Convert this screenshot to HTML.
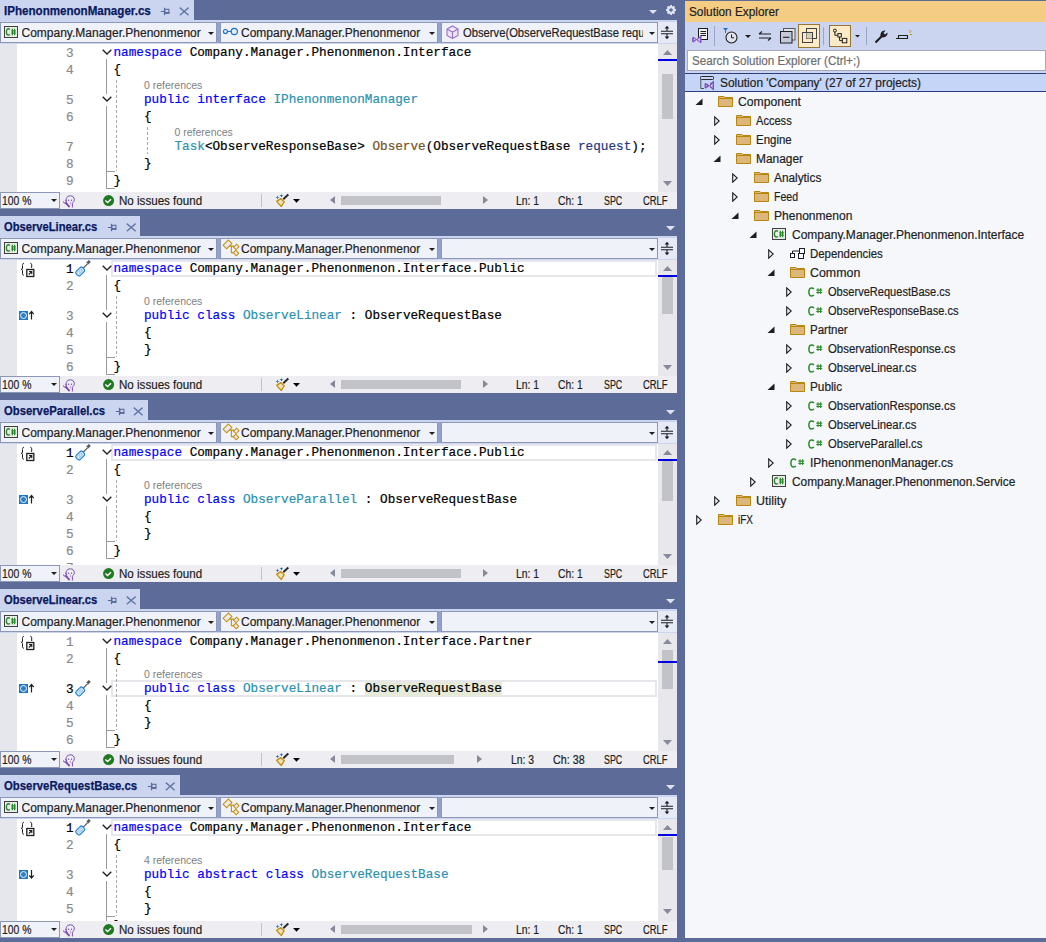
<!DOCTYPE html>
<html><head><meta charset="utf-8"><style>
*{margin:0;padding:0}
html,body{width:1046px;height:942px;overflow:hidden;background:#5d6b99;position:relative}
.t{position:absolute;white-space:pre;font-family:"Liberation Sans",sans-serif;font-size:12px;line-height:15px;color:#1e1e1e;-webkit-text-stroke:0.2px currentColor}
.tab{font-weight:bold;font-size:11.5px;color:#0e1c6e}
.clip{overflow:hidden}
.code{font-family:"Liberation Mono",monospace;font-size:12.7px;line-height:17px;color:#000}
.num{color:#8a8a8a}
.cl{font-size:10.5px;line-height:13px;color:#808080;-webkit-text-stroke:0}
.st{color:#1e1e1e}
.se{font-size:12px;line-height:19px;color:#1e1e1e}
</style></head>
<body>
<div style="position:absolute;left:0px;top:0px;width:194px;height:20px;background:#ccd5f0;"></div>
<div class="t" style="left:4.2px;top:4px;font-size:12px;line-height:15px;color:#0b1a60;font-weight:bold;transform:scaleX(0.9656);transform-origin:0 0;-webkit-text-stroke:0.25px #0b1a60;">IPhenonmenonManager.cs</div>
<svg style="position:absolute;left:160px;top:7px;" width="10" height="10" viewBox="0 0 10 10"><path d="M0.8 4.5H4M4.5 0.8V8.2" stroke="#5a6b9e" stroke-width="1.2"/><rect x="4.9" y="2.3" width="4" height="4" fill="none" stroke="#5a6b9e" stroke-width="1.1"/><rect x="4.5" y="5" width="4.8" height="1.6" fill="#5a6b9e"/></svg>
<svg style="position:absolute;left:179px;top:7px;" width="11" height="9" viewBox="0 0 11 9"><path d="M0.8 0.6L9.6 8.2M9.6 0.6L0.8 8.2" stroke="#6478a8" stroke-width="1.4" fill="none"/></svg>
<svg style="position:absolute;left:649px;top:10px;" width="8" height="5" viewBox="0 0 8 5"><path d="M0 0H8L4.0 4.0Z" fill="#dfe3ef"/></svg>
<svg style="position:absolute;left:665px;top:4px;" width="12" height="12" viewBox="0 0 12 12"><circle cx="6" cy="6" r="2.9" fill="none" stroke="#dfe3ef" stroke-width="2.2"/><g stroke="#dfe3ef" stroke-width="1.8"><path d="M6 1V3M6 9V11M1 6H3M9 6H11M2.5 2.5L3.9 3.9M8.1 8.1L9.5 9.5M2.5 9.5L3.9 8.1M8.1 3.9L9.5 2.5"/></g></svg>
<div style="position:absolute;left:0px;top:20px;width:677px;height:24px;background:#ccd5ee;"></div>
<div style="position:absolute;left:0px;top:22px;width:217px;height:21px;background:#f0f2fa;box-sizing:border-box;border:1px solid #8d98b8"></div>
<svg style="position:absolute;left:208px;top:32px;" width="6" height="4" viewBox="0 0 6 4"><path d="M0 0H6L3.0 3.0Z" fill="#1e1e1e"/></svg>
<div style="position:absolute;left:220px;top:22px;width:218px;height:21px;background:#f0f2fa;box-sizing:border-box;border:1px solid #8d98b8"></div>
<svg style="position:absolute;left:429px;top:32px;" width="6" height="4" viewBox="0 0 6 4"><path d="M0 0H6L3.0 3.0Z" fill="#1e1e1e"/></svg>
<div style="position:absolute;left:441px;top:22px;width:217px;height:21px;background:#f0f2fa;box-sizing:border-box;border:1px solid #8d98b8"></div>
<svg style="position:absolute;left:649px;top:32px;" width="6" height="4" viewBox="0 0 6 4"><path d="M0 0H6L3.0 3.0Z" fill="#1e1e1e"/></svg>
<div style="position:absolute;left:217px;top:22px;width:3px;height:21px;background:#93a2cc;"></div>
<div style="position:absolute;left:438px;top:22px;width:3px;height:21px;background:#93a2cc;"></div>
<div style="position:absolute;left:658px;top:22px;width:19px;height:21px;background:#e6eaf7;"></div>
<svg style="position:absolute;left:660px;top:24px;" width="14" height="16" viewBox="0 0 14 16"><path d="M1 7.3H13M1 9.7H13M7 3.5V7M7 10V13" stroke="#1e1e1e" stroke-width="1.1"/><path d="M4.6 4.6L7 1.8L9.4 4.6Z M4.6 12.4L7 15.2L9.4 12.4Z" fill="#1e1e1e"/></svg>
<svg style="position:absolute;left:4px;top:26px;" width="14" height="13" viewBox="0 0 14 13"><rect x="0.5" y="0.5" width="13" height="11" fill="#ececec" stroke="#404040"/><path d="M5.9 3.4C5.5 3 5 2.8 4.4 2.8C3.2 2.8 2.4 3.8 2.4 5.9C2.4 8 3.2 9 4.4 9C5 9 5.5 8.8 5.9 8.4" fill="none" stroke="#2b8a2b" stroke-width="1.4"/><path d="M8.4 2.8V9.2M10.6 2.8V9.2M7.2 4.8H11.8M7.2 7.1H11.8" stroke="#2b8a2b" stroke-width="1.2"/></svg>
<div class="t ui clip" style="left:21.5px;top:26px;width:181px">Company.Manager.Phenonmenor</div>
<svg style="position:absolute;left:221px;top:26px;" width="18" height="11" viewBox="0 0 18 11"><circle cx="4.45" cy="5.5" r="2" fill="#e4eef9" stroke="#1a73c8" stroke-width="1.15"/><circle cx="13.3" cy="5.5" r="3.1" fill="#e4eef9" stroke="#1a73c8" stroke-width="1.15"/><path d="M6.4 5.5H10.2" stroke="#1a73c8" stroke-width="1.1"/></svg>
<div class="t ui clip" style="left:241px;top:26px;width:182px">Company.Manager.Phenonmenor</div>
<svg style="position:absolute;left:446px;top:25px;" width="13" height="14" viewBox="0 0 13 14"><path d="M6.5 1L12 4V10.5L6.5 13.5L1 10.5V4Z M1 4L6.5 7L12 4M6.5 7V13.5" fill="#ece4f7" stroke="#9b6fc8" stroke-width="1.1"/></svg>
<div class="t ui clip" style="left:462.8px;top:26px;width:180px"><span style="display:inline-block;transform:scaleX(0.935);transform-origin:0 0">Observe(ObserveRequestBase requ</span></div>
<div style="position:absolute;left:0px;top:44px;width:17px;height:148px;background:#e6e7ed;"></div>
<div style="position:absolute;left:17px;top:44px;width:641px;height:148px;background:#ffffff;"></div>
<div style="position:absolute;left:658px;top:44px;width:19px;height:148px;background:#e8e8ec;"></div>
<svg style="position:absolute;left:663px;top:50px;" width="10" height="6" viewBox="0 0 10 6"><path d="M0 5H9L4.5 0Z" fill="#868999"/></svg>
<div style="position:absolute;left:662px;top:74px;width:11px;height:45px;background:#c2c3c9;"></div>
<div style="position:absolute;left:658px;top:59px;width:19px;height:2px;background:#0000e0;"></div>
<svg style="position:absolute;left:663px;top:181px;" width="10" height="6" viewBox="0 0 10 6"><path d="M0 0H9L4.5 5Z" fill="#868999"/></svg>
<div style="position:absolute;left:0px;top:192px;width:677px;height:17px;background:#eeeef2;"></div>
<div style="position:absolute;left:0px;top:192px;width:60px;height:17px;background:#f0f2fa;box-sizing:border-box;border:1px solid #8d98b8"></div>
<div class="t" style="left:2.3px;top:194px;font-size:12px;line-height:15px;color:#1e1e1e;transform:scaleX(0.8641);transform-origin:0 0;">100 %</div>
<svg style="position:absolute;left:51px;top:199px;" width="6" height="4" viewBox="0 0 6 4"><path d="M0 0H6L3.0 3.0Z" fill="#1e1e1e"/></svg>
<svg style="position:absolute;left:58px;top:191px;" width="20" height="18" viewBox="0 0 20 18"><path d="M9.6 13C8.2 11.6 7.8 9.6 8.2 7.8C8.7 5.7 10.5 4.8 12.4 4.8C14.7 4.8 16.4 6.4 16.3 8.8C16.2 10.4 15.2 11.2 14.4 12.2V16.5" fill="none" stroke="#7b4fb5" stroke-width="1"/><circle cx="10.6" cy="9.2" r="0.7" fill="#7b4fb5"/><circle cx="13.5" cy="9.2" r="0.7" fill="#7b4fb5"/><path d="M12.4 10.5V13.5" stroke="#b9a0dc" stroke-width="1"/><path d="M11.6 16L7.8 12.2" stroke="#7b4fb5" stroke-width="1.8"/><path d="M8.5 12.4C6.7 13.3 4.7 12.1 5.1 10L6.9 11.7L8.3 10.4L6.6 9.1C8.5 8.7 9.8 10.6 8.5 12.4Z" fill="#7b4fb5"/></svg>
<svg style="position:absolute;left:103px;top:195px;" width="12" height="12" viewBox="0 0 12 12"><circle cx="5.6" cy="5.6" r="5.5" fill="#1f7a22"/><path d="M2.4 5.6L4.6 7.6L8 4.3" stroke="#fff" stroke-width="1.4" fill="none"/></svg>
<div class="t" style="left:119.3px;top:194px;font-size:12px;line-height:15px;color:#1e1e1e;transform:scaleX(0.9658);transform-origin:0 0;">No issues found</div>
<div style="position:absolute;left:261px;top:194px;width:1px;height:13px;background:#c2c3c9;"></div>
<svg style="position:absolute;left:272px;top:192px;" width="30" height="17" viewBox="0 0 30 17"><path d="M11.3 7.2L16.3 2.6" stroke="#2a2a2a" stroke-width="2"/><path d="M4.6 9.4L8.8 6.7L12.2 9.7L9.3 14.5Z" fill="#efe2b8" stroke="#c49018" stroke-width="1.4" stroke-linejoin="round"/><path d="M5.5 3.6L6 5L7.4 5.5L6 6L5.5 7.4L5 6L3.6 5.5L5 5Z" fill="#1a6fc0"/><path d="M9.4 2L9.9 3.3L11.2 3.8L9.9 4.3L9.4 5.6L8.9 4.3L7.6 3.8L8.9 3.3Z" fill="#0f5a9e"/><path d="M21 7H28L24.5 10.8Z" fill="#000"/></svg>
<svg style="position:absolute;left:330px;top:196px;" width="6" height="9" viewBox="0 0 6 9"><path d="M5 0V8L0 4Z" fill="#868999"/></svg>
<div style="position:absolute;left:341px;top:196px;width:100px;height:9px;background:#c2c3c9;"></div>
<svg style="position:absolute;left:483px;top:196px;" width="6" height="9" viewBox="0 0 6 9"><path d="M0 0V8L5 4Z" fill="#868999"/></svg>
<div class="t" style="left:516.4px;top:194px;font-size:12px;line-height:15px;color:#1e1e1e;transform:scaleX(0.8656);transform-origin:0 0;">Ln: 1</div>
<div class="t" style="left:558.4px;top:194px;font-size:12px;line-height:15px;color:#1e1e1e;transform:scaleX(0.8577);transform-origin:0 0;">Ch: 1</div>
<div class="t" style="left:603.7px;top:194px;font-size:12px;line-height:15px;color:#1e1e1e;transform:scaleX(0.7416);transform-origin:0 0;">SPC</div>
<div class="t" style="left:642.6px;top:194px;font-size:12px;line-height:15px;color:#1e1e1e;transform:scaleX(0.7851);transform-origin:0 0;">CRLF</div>
<div style="position:absolute;left:0;top:44px;width:658px;height:148px;overflow:hidden">
<svg style="position:absolute;left:102px;top:5px" width="10" height="6" viewBox="0 0 10 6"><path d="M0.7 0.7L5 5L9.3 0.7" fill="none" stroke="#1e1e1e" stroke-width="1.3"/></svg>
<svg style="position:absolute;left:102px;top:52px" width="10" height="6" viewBox="0 0 10 6"><path d="M0.7 0.7L5 5L9.3 0.7" fill="none" stroke="#1e1e1e" stroke-width="1.3"/></svg>
<div style="position:absolute;left:106px;top:15px;width:1px;height:35px;background:#9a9a9a"></div>
<div style="position:absolute;left:106px;top:62px;width:1px;height:83px;background:#9a9a9a"></div>
<div style="position:absolute;left:106px;top:127px;width:9px;height:1px;background:#9a9a9a"></div>
<div style="position:absolute;left:106px;top:144px;width:9px;height:1px;background:#9a9a9a"></div>
<div style="position:absolute;left:116px;top:36px;width:1px;height:91px;background:repeating-linear-gradient(to bottom,#a8a8a8 0 3px,transparent 3px 5px)"></div>
<div style="position:absolute;left:147px;top:83px;width:1px;height:27px;background:repeating-linear-gradient(to bottom,#a8a8a8 0 3px,transparent 3px 5px)"></div>
<div class="t code num" style="left:66px;top:1px;">3</div>
<div class="t code" style="left:113.5px;top:0px"><span style="color:#0000ff">namespace</span><span style="color:#000000"> Company.Manager.Phenonmenon.Interface</span></div>
<div class="t code num" style="left:66px;top:18px;">4</div>
<div class="t code" style="left:113.5px;top:17px"><span style="color:#000000">{</span></div>
<div class="t cl" style="left:143.98px;top:35px">0 references</div>
<div class="t code num" style="left:66px;top:48px;">5</div>
<div class="t code" style="left:113.5px;top:47px"><span style="color:#000000">    </span><span style="color:#0000ff">public</span><span style="color:#000000"> </span><span style="color:#0000ff">interface</span><span style="color:#000000"> </span><span style="color:#2b91af">IPhenonmenonManager</span></div>
<div class="t code num" style="left:66px;top:65px;">6</div>
<div class="t code" style="left:113.5px;top:64px"><span style="color:#000000">    {</span></div>
<div class="t cl" style="left:174.46px;top:82px">0 references</div>
<div class="t code num" style="left:66px;top:95px;">7</div>
<div class="t code" style="left:113.5px;top:94px"><span style="color:#000000">        </span><span style="color:#2b91af">Task</span><span style="color:#000000">&lt;ObserveResponseBase&gt; </span><span style="color:#74531f">Observe</span><span style="color:#000000">(ObserveRequestBase </span><span style="color:#1f377f">request</span><span style="color:#000000">);</span></div>
<div class="t code num" style="left:66px;top:112px;">8</div>
<div class="t code" style="left:113.5px;top:111px"><span style="color:#000000">    }</span></div>
<div class="t code num" style="left:66px;top:129px;">9</div>
<div class="t code" style="left:113.5px;top:128px"><span style="color:#000000">}</span></div>
</div>
<div style="position:absolute;left:0px;top:216px;width:140px;height:20px;background:#ccd5f0;"></div>
<div class="t" style="left:4.2px;top:220px;font-size:12px;line-height:15px;color:#0b1a60;font-weight:bold;transform:scaleX(0.9325);transform-origin:0 0;-webkit-text-stroke:0.25px #0b1a60;">ObserveLinear.cs</div>
<svg style="position:absolute;left:107px;top:223px;" width="10" height="10" viewBox="0 0 10 10"><path d="M0.8 4.5H4M4.5 0.8V8.2" stroke="#5a6b9e" stroke-width="1.2"/><rect x="4.9" y="2.3" width="4" height="4" fill="none" stroke="#5a6b9e" stroke-width="1.1"/><rect x="4.5" y="5" width="4.8" height="1.6" fill="#5a6b9e"/></svg>
<svg style="position:absolute;left:126px;top:223px;" width="11" height="9" viewBox="0 0 11 9"><path d="M0.8 0.6L9.6 8.2M9.6 0.6L0.8 8.2" stroke="#6478a8" stroke-width="1.4" fill="none"/></svg>
<svg style="position:absolute;left:666px;top:226px;" width="9" height="5" viewBox="0 0 9 5"><path d="M0 0H9L4.5 4.5Z" fill="#dfe3ef"/></svg>
<div style="position:absolute;left:0px;top:236px;width:677px;height:24px;background:#ccd5ee;"></div>
<div style="position:absolute;left:0px;top:238px;width:217px;height:21px;background:#f0f2fa;box-sizing:border-box;border:1px solid #8d98b8"></div>
<svg style="position:absolute;left:208px;top:248px;" width="6" height="4" viewBox="0 0 6 4"><path d="M0 0H6L3.0 3.0Z" fill="#1e1e1e"/></svg>
<div style="position:absolute;left:220px;top:238px;width:218px;height:21px;background:#f0f2fa;box-sizing:border-box;border:1px solid #8d98b8"></div>
<svg style="position:absolute;left:429px;top:248px;" width="6" height="4" viewBox="0 0 6 4"><path d="M0 0H6L3.0 3.0Z" fill="#1e1e1e"/></svg>
<div style="position:absolute;left:441px;top:238px;width:217px;height:21px;background:#f0f2fa;box-sizing:border-box;border:1px solid #8d98b8"></div>
<svg style="position:absolute;left:649px;top:248px;" width="6" height="4" viewBox="0 0 6 4"><path d="M0 0H6L3.0 3.0Z" fill="#1e1e1e"/></svg>
<div style="position:absolute;left:217px;top:238px;width:3px;height:21px;background:#93a2cc;"></div>
<div style="position:absolute;left:438px;top:238px;width:3px;height:21px;background:#93a2cc;"></div>
<div style="position:absolute;left:658px;top:238px;width:19px;height:21px;background:#e6eaf7;"></div>
<svg style="position:absolute;left:660px;top:240px;" width="14" height="16" viewBox="0 0 14 16"><path d="M1 7.3H13M1 9.7H13M7 3.5V7M7 10V13" stroke="#1e1e1e" stroke-width="1.1"/><path d="M4.6 4.6L7 1.8L9.4 4.6Z M4.6 12.4L7 15.2L9.4 12.4Z" fill="#1e1e1e"/></svg>
<svg style="position:absolute;left:4px;top:242px;" width="14" height="13" viewBox="0 0 14 13"><rect x="0.5" y="0.5" width="13" height="11" fill="#ececec" stroke="#404040"/><path d="M5.9 3.4C5.5 3 5 2.8 4.4 2.8C3.2 2.8 2.4 3.8 2.4 5.9C2.4 8 3.2 9 4.4 9C5 9 5.5 8.8 5.9 8.4" fill="none" stroke="#2b8a2b" stroke-width="1.4"/><path d="M8.4 2.8V9.2M10.6 2.8V9.2M7.2 4.8H11.8M7.2 7.1H11.8" stroke="#2b8a2b" stroke-width="1.2"/></svg>
<div class="t ui clip" style="left:21.5px;top:242px;width:181px">Company.Manager.Phenonmenor</div>
<svg style="position:absolute;left:221px;top:238px;" width="20" height="20" viewBox="0 0 20 20"><g fill="#ebebeb" stroke="#c8900a" stroke-width="1"><rect x="2.75" y="3.9" width="7.5" height="5" transform="rotate(-45 6.5 6.4)"/><rect x="13.2" y="7.15" width="4.2" height="3.5" transform="rotate(-45 15.3 8.9)"/><rect x="12.9" y="13.25" width="4.2" height="3.5" transform="rotate(45 15 15)"/></g><path d="M8.5 8.1H13M10.4 8.1V14.6H12.8" stroke="#c8900a" stroke-width="1.1" fill="none"/></svg>
<div class="t ui clip" style="left:241px;top:242px;width:182px">Company.Manager.Phenonmenor</div>
<div style="position:absolute;left:0px;top:260px;width:17px;height:116px;background:#e6e7ed;"></div>
<div style="position:absolute;left:17px;top:260px;width:641px;height:116px;background:#ffffff;"></div>
<div style="position:absolute;left:658px;top:260px;width:19px;height:116px;background:#e8e8ec;"></div>
<svg style="position:absolute;left:663px;top:266px;" width="10" height="6" viewBox="0 0 10 6"><path d="M0 5H9L4.5 0Z" fill="#868999"/></svg>
<div style="position:absolute;left:662px;top:277px;width:11px;height:37px;background:#c2c3c9;"></div>
<div style="position:absolute;left:658px;top:275px;width:19px;height:2px;background:#0000e0;"></div>
<svg style="position:absolute;left:663px;top:365px;" width="10" height="6" viewBox="0 0 10 6"><path d="M0 0H9L4.5 5Z" fill="#868999"/></svg>
<div style="position:absolute;left:0px;top:376px;width:677px;height:17px;background:#eeeef2;"></div>
<div style="position:absolute;left:0px;top:376px;width:60px;height:17px;background:#f0f2fa;box-sizing:border-box;border:1px solid #8d98b8"></div>
<div class="t" style="left:2.3px;top:378px;font-size:12px;line-height:15px;color:#1e1e1e;transform:scaleX(0.8641);transform-origin:0 0;">100 %</div>
<svg style="position:absolute;left:51px;top:383px;" width="6" height="4" viewBox="0 0 6 4"><path d="M0 0H6L3.0 3.0Z" fill="#1e1e1e"/></svg>
<svg style="position:absolute;left:58px;top:375px;" width="20" height="18" viewBox="0 0 20 18"><path d="M9.6 13C8.2 11.6 7.8 9.6 8.2 7.8C8.7 5.7 10.5 4.8 12.4 4.8C14.7 4.8 16.4 6.4 16.3 8.8C16.2 10.4 15.2 11.2 14.4 12.2V16.5" fill="none" stroke="#7b4fb5" stroke-width="1"/><circle cx="10.6" cy="9.2" r="0.7" fill="#7b4fb5"/><circle cx="13.5" cy="9.2" r="0.7" fill="#7b4fb5"/><path d="M12.4 10.5V13.5" stroke="#b9a0dc" stroke-width="1"/><path d="M11.6 16L7.8 12.2" stroke="#7b4fb5" stroke-width="1.8"/><path d="M8.5 12.4C6.7 13.3 4.7 12.1 5.1 10L6.9 11.7L8.3 10.4L6.6 9.1C8.5 8.7 9.8 10.6 8.5 12.4Z" fill="#7b4fb5"/></svg>
<svg style="position:absolute;left:103px;top:379px;" width="12" height="12" viewBox="0 0 12 12"><circle cx="5.6" cy="5.6" r="5.5" fill="#1f7a22"/><path d="M2.4 5.6L4.6 7.6L8 4.3" stroke="#fff" stroke-width="1.4" fill="none"/></svg>
<div class="t" style="left:119.3px;top:378px;font-size:12px;line-height:15px;color:#1e1e1e;transform:scaleX(0.9658);transform-origin:0 0;">No issues found</div>
<div style="position:absolute;left:261px;top:378px;width:1px;height:13px;background:#c2c3c9;"></div>
<svg style="position:absolute;left:272px;top:376px;" width="30" height="17" viewBox="0 0 30 17"><path d="M11.3 7.2L16.3 2.6" stroke="#2a2a2a" stroke-width="2"/><path d="M4.6 9.4L8.8 6.7L12.2 9.7L9.3 14.5Z" fill="#efe2b8" stroke="#c49018" stroke-width="1.4" stroke-linejoin="round"/><path d="M5.5 3.6L6 5L7.4 5.5L6 6L5.5 7.4L5 6L3.6 5.5L5 5Z" fill="#1a6fc0"/><path d="M9.4 2L9.9 3.3L11.2 3.8L9.9 4.3L9.4 5.6L8.9 4.3L7.6 3.8L8.9 3.3Z" fill="#0f5a9e"/><path d="M21 7H28L24.5 10.8Z" fill="#000"/></svg>
<svg style="position:absolute;left:330px;top:380px;" width="6" height="9" viewBox="0 0 6 9"><path d="M5 0V8L0 4Z" fill="#868999"/></svg>
<div style="position:absolute;left:341px;top:380px;width:120px;height:9px;background:#c2c3c9;"></div>
<svg style="position:absolute;left:483px;top:380px;" width="6" height="9" viewBox="0 0 6 9"><path d="M0 0V8L5 4Z" fill="#868999"/></svg>
<div class="t" style="left:516.4px;top:378px;font-size:12px;line-height:15px;color:#1e1e1e;transform:scaleX(0.8656);transform-origin:0 0;">Ln: 1</div>
<div class="t" style="left:558.4px;top:378px;font-size:12px;line-height:15px;color:#1e1e1e;transform:scaleX(0.8577);transform-origin:0 0;">Ch: 1</div>
<div class="t" style="left:603.7px;top:378px;font-size:12px;line-height:15px;color:#1e1e1e;transform:scaleX(0.7416);transform-origin:0 0;">SPC</div>
<div class="t" style="left:642.6px;top:378px;font-size:12px;line-height:15px;color:#1e1e1e;transform:scaleX(0.7851);transform-origin:0 0;">CRLF</div>
<div style="position:absolute;left:0;top:260px;width:658px;height:116px;overflow:hidden">
<div style="position:absolute;left:111px;top:0px;width:546px;height:17px;box-sizing:border-box;border:2px solid #e6e6eb"></div>
<svg style="position:absolute;left:102px;top:5px" width="10" height="6" viewBox="0 0 10 6"><path d="M0.7 0.7L5 5L9.3 0.7" fill="none" stroke="#1e1e1e" stroke-width="1.3"/></svg>
<svg style="position:absolute;left:102px;top:52px" width="10" height="6" viewBox="0 0 10 6"><path d="M0.7 0.7L5 5L9.3 0.7" fill="none" stroke="#1e1e1e" stroke-width="1.3"/></svg>
<div style="position:absolute;left:106px;top:15px;width:1px;height:35px;background:#9a9a9a"></div>
<div style="position:absolute;left:106px;top:62px;width:1px;height:53px;background:#9a9a9a"></div>
<div style="position:absolute;left:106px;top:97px;width:9px;height:1px;background:#9a9a9a"></div>
<div style="position:absolute;left:106px;top:114px;width:9px;height:1px;background:#9a9a9a"></div>
<div style="position:absolute;left:116px;top:36px;width:1px;height:61px;background:repeating-linear-gradient(to bottom,#a8a8a8 0 3px,transparent 3px 5px)"></div>
<svg style="position:absolute;left:19px;top:2px" width="17" height="16" viewBox="0 0 17 16"><path d="M5 1.3C3.7 1.3 3.5 2.3 3.5 3.5V6C3.5 7 3 7.3 2 7.3C3 7.3 3.5 7.6 3.5 8.6V11.2C3.5 12.3 3.7 13.3 5 13.3M11.3 1.3C12.3 1.3 12.7 1.8 12.7 3V6" fill="none" stroke="#1e1e1e" stroke-width="1"/><rect x="7.8" y="7.5" width="7" height="7" fill="#fff" stroke="#1e1e1e" stroke-width="1.3"/><path d="M9.8 12.5L12.8 9.5M10 9.5H12.8V12.3" fill="none" stroke="#1e1e1e" stroke-width="1.1"/></svg>
<svg style="position:absolute;left:72px;top:-2px" width="20" height="20" viewBox="0 0 20 20"><g transform="rotate(-45 8.2 13.5)"><rect x="3.7" y="10.6" width="9" height="5.8" rx="1.8" fill="#d3e6f7" stroke="#1a7fd4" stroke-width="1.1"/><path d="M10.3 10.6V16.4M5.5 12.6H9.5M5.5 14.4H9.5" stroke="#7fb3e6" stroke-width="0.7"/></g><path d="M11.3 10.2L15.5 5.8" stroke="#555" stroke-width="1.2"/><path d="M14.3 4.6L16.8 2.1L18.8 3.7L16.4 6.5Z" fill="#5a5a5a"/></svg>
<svg style="position:absolute;left:17px;top:46px" width="18" height="16" viewBox="0 0 18 16"><rect x="2" y="5" width="9" height="9" fill="#2277c0"/><circle cx="6.5" cy="9.5" r="3" fill="#2d80cc" stroke="#eef5fc" stroke-width="1"/><path d="M14.5 13.5V6M12.3 8.2L14.5 5.5L16.7 8.2" fill="none" stroke="#1e1e1e" stroke-width="1.2"/></svg>
<div class="t code num" style="left:66px;top:1px;color:#000">1</div>
<div class="t code" style="left:113.5px;top:0px"><span style="color:#0000ff">namespace</span><span style="color:#000000"> Company.Manager.Phenonmenon.Interface.Public</span></div>
<div class="t code num" style="left:66px;top:18px;">2</div>
<div class="t code" style="left:113.5px;top:17px"><span style="color:#000000">{</span></div>
<div class="t cl" style="left:143.98px;top:35px">0 references</div>
<div class="t code num" style="left:66px;top:48px;">3</div>
<div class="t code" style="left:113.5px;top:47px"><span style="color:#000000">    </span><span style="color:#0000ff">public</span><span style="color:#000000"> </span><span style="color:#0000ff">class</span><span style="color:#000000"> </span><span style="color:#2b91af">ObserveLinear</span><span style="color:#000000"> : ObserveRequestBase</span></div>
<div class="t code num" style="left:66px;top:65px;">4</div>
<div class="t code" style="left:113.5px;top:64px"><span style="color:#000000">    {</span></div>
<div class="t code num" style="left:66px;top:82px;">5</div>
<div class="t code" style="left:113.5px;top:81px"><span style="color:#000000">    }</span></div>
<div class="t code num" style="left:66px;top:99px;">6</div>
<div class="t code" style="left:113.5px;top:98px"><span style="color:#000000">}</span></div>
<div class="t code num" style="left:66px;top:116px;">7</div>
<div class="t code" style="left:113.5px;top:115px"><span style="color:#000000"></span></div>
</div>
<div style="position:absolute;left:0px;top:400px;width:148px;height:20px;background:#ccd5f0;"></div>
<div class="t" style="left:4.2px;top:404px;font-size:12px;line-height:15px;color:#0b1a60;font-weight:bold;transform:scaleX(0.9404);transform-origin:0 0;-webkit-text-stroke:0.25px #0b1a60;">ObserveParallel.cs</div>
<svg style="position:absolute;left:115px;top:407px;" width="10" height="10" viewBox="0 0 10 10"><path d="M0.8 4.5H4M4.5 0.8V8.2" stroke="#5a6b9e" stroke-width="1.2"/><rect x="4.9" y="2.3" width="4" height="4" fill="none" stroke="#5a6b9e" stroke-width="1.1"/><rect x="4.5" y="5" width="4.8" height="1.6" fill="#5a6b9e"/></svg>
<svg style="position:absolute;left:133px;top:407px;" width="11" height="9" viewBox="0 0 11 9"><path d="M0.8 0.6L9.6 8.2M9.6 0.6L0.8 8.2" stroke="#6478a8" stroke-width="1.4" fill="none"/></svg>
<svg style="position:absolute;left:666px;top:410px;" width="9" height="5" viewBox="0 0 9 5"><path d="M0 0H9L4.5 4.5Z" fill="#dfe3ef"/></svg>
<div style="position:absolute;left:0px;top:420px;width:677px;height:24px;background:#ccd5ee;"></div>
<div style="position:absolute;left:0px;top:422px;width:217px;height:21px;background:#f0f2fa;box-sizing:border-box;border:1px solid #8d98b8"></div>
<svg style="position:absolute;left:208px;top:432px;" width="6" height="4" viewBox="0 0 6 4"><path d="M0 0H6L3.0 3.0Z" fill="#1e1e1e"/></svg>
<div style="position:absolute;left:220px;top:422px;width:218px;height:21px;background:#f0f2fa;box-sizing:border-box;border:1px solid #8d98b8"></div>
<svg style="position:absolute;left:429px;top:432px;" width="6" height="4" viewBox="0 0 6 4"><path d="M0 0H6L3.0 3.0Z" fill="#1e1e1e"/></svg>
<div style="position:absolute;left:441px;top:422px;width:217px;height:21px;background:#f0f2fa;box-sizing:border-box;border:1px solid #8d98b8"></div>
<svg style="position:absolute;left:649px;top:432px;" width="6" height="4" viewBox="0 0 6 4"><path d="M0 0H6L3.0 3.0Z" fill="#1e1e1e"/></svg>
<div style="position:absolute;left:217px;top:422px;width:3px;height:21px;background:#93a2cc;"></div>
<div style="position:absolute;left:438px;top:422px;width:3px;height:21px;background:#93a2cc;"></div>
<div style="position:absolute;left:658px;top:422px;width:19px;height:21px;background:#e6eaf7;"></div>
<svg style="position:absolute;left:660px;top:424px;" width="14" height="16" viewBox="0 0 14 16"><path d="M1 7.3H13M1 9.7H13M7 3.5V7M7 10V13" stroke="#1e1e1e" stroke-width="1.1"/><path d="M4.6 4.6L7 1.8L9.4 4.6Z M4.6 12.4L7 15.2L9.4 12.4Z" fill="#1e1e1e"/></svg>
<svg style="position:absolute;left:4px;top:426px;" width="14" height="13" viewBox="0 0 14 13"><rect x="0.5" y="0.5" width="13" height="11" fill="#ececec" stroke="#404040"/><path d="M5.9 3.4C5.5 3 5 2.8 4.4 2.8C3.2 2.8 2.4 3.8 2.4 5.9C2.4 8 3.2 9 4.4 9C5 9 5.5 8.8 5.9 8.4" fill="none" stroke="#2b8a2b" stroke-width="1.4"/><path d="M8.4 2.8V9.2M10.6 2.8V9.2M7.2 4.8H11.8M7.2 7.1H11.8" stroke="#2b8a2b" stroke-width="1.2"/></svg>
<div class="t ui clip" style="left:21.5px;top:426px;width:181px">Company.Manager.Phenonmenor</div>
<svg style="position:absolute;left:221px;top:422px;" width="20" height="20" viewBox="0 0 20 20"><g fill="#ebebeb" stroke="#c8900a" stroke-width="1"><rect x="2.75" y="3.9" width="7.5" height="5" transform="rotate(-45 6.5 6.4)"/><rect x="13.2" y="7.15" width="4.2" height="3.5" transform="rotate(-45 15.3 8.9)"/><rect x="12.9" y="13.25" width="4.2" height="3.5" transform="rotate(45 15 15)"/></g><path d="M8.5 8.1H13M10.4 8.1V14.6H12.8" stroke="#c8900a" stroke-width="1.1" fill="none"/></svg>
<div class="t ui clip" style="left:241px;top:426px;width:182px">Company.Manager.Phenonmenor</div>
<div style="position:absolute;left:0px;top:444px;width:17px;height:121px;background:#e6e7ed;"></div>
<div style="position:absolute;left:17px;top:444px;width:641px;height:121px;background:#ffffff;"></div>
<div style="position:absolute;left:658px;top:444px;width:19px;height:121px;background:#e8e8ec;"></div>
<svg style="position:absolute;left:663px;top:450px;" width="10" height="6" viewBox="0 0 10 6"><path d="M0 5H9L4.5 0Z" fill="#868999"/></svg>
<div style="position:absolute;left:662px;top:461px;width:11px;height:40px;background:#c2c3c9;"></div>
<div style="position:absolute;left:658px;top:459px;width:19px;height:2px;background:#0000e0;"></div>
<svg style="position:absolute;left:663px;top:554px;" width="10" height="6" viewBox="0 0 10 6"><path d="M0 0H9L4.5 5Z" fill="#868999"/></svg>
<div style="position:absolute;left:0px;top:565px;width:677px;height:17px;background:#eeeef2;"></div>
<div style="position:absolute;left:0px;top:565px;width:60px;height:17px;background:#f0f2fa;box-sizing:border-box;border:1px solid #8d98b8"></div>
<div class="t" style="left:2.3px;top:567px;font-size:12px;line-height:15px;color:#1e1e1e;transform:scaleX(0.8641);transform-origin:0 0;">100 %</div>
<svg style="position:absolute;left:51px;top:572px;" width="6" height="4" viewBox="0 0 6 4"><path d="M0 0H6L3.0 3.0Z" fill="#1e1e1e"/></svg>
<svg style="position:absolute;left:58px;top:564px;" width="20" height="18" viewBox="0 0 20 18"><path d="M9.6 13C8.2 11.6 7.8 9.6 8.2 7.8C8.7 5.7 10.5 4.8 12.4 4.8C14.7 4.8 16.4 6.4 16.3 8.8C16.2 10.4 15.2 11.2 14.4 12.2V16.5" fill="none" stroke="#7b4fb5" stroke-width="1"/><circle cx="10.6" cy="9.2" r="0.7" fill="#7b4fb5"/><circle cx="13.5" cy="9.2" r="0.7" fill="#7b4fb5"/><path d="M12.4 10.5V13.5" stroke="#b9a0dc" stroke-width="1"/><path d="M11.6 16L7.8 12.2" stroke="#7b4fb5" stroke-width="1.8"/><path d="M8.5 12.4C6.7 13.3 4.7 12.1 5.1 10L6.9 11.7L8.3 10.4L6.6 9.1C8.5 8.7 9.8 10.6 8.5 12.4Z" fill="#7b4fb5"/></svg>
<svg style="position:absolute;left:103px;top:568px;" width="12" height="12" viewBox="0 0 12 12"><circle cx="5.6" cy="5.6" r="5.5" fill="#1f7a22"/><path d="M2.4 5.6L4.6 7.6L8 4.3" stroke="#fff" stroke-width="1.4" fill="none"/></svg>
<div class="t" style="left:119.3px;top:567px;font-size:12px;line-height:15px;color:#1e1e1e;transform:scaleX(0.9658);transform-origin:0 0;">No issues found</div>
<div style="position:absolute;left:261px;top:567px;width:1px;height:13px;background:#c2c3c9;"></div>
<svg style="position:absolute;left:272px;top:565px;" width="30" height="17" viewBox="0 0 30 17"><path d="M11.3 7.2L16.3 2.6" stroke="#2a2a2a" stroke-width="2"/><path d="M4.6 9.4L8.8 6.7L12.2 9.7L9.3 14.5Z" fill="#efe2b8" stroke="#c49018" stroke-width="1.4" stroke-linejoin="round"/><path d="M5.5 3.6L6 5L7.4 5.5L6 6L5.5 7.4L5 6L3.6 5.5L5 5Z" fill="#1a6fc0"/><path d="M9.4 2L9.9 3.3L11.2 3.8L9.9 4.3L9.4 5.6L8.9 4.3L7.6 3.8L8.9 3.3Z" fill="#0f5a9e"/><path d="M21 7H28L24.5 10.8Z" fill="#000"/></svg>
<svg style="position:absolute;left:330px;top:569px;" width="6" height="9" viewBox="0 0 6 9"><path d="M5 0V8L0 4Z" fill="#868999"/></svg>
<div style="position:absolute;left:341px;top:569px;width:120px;height:9px;background:#c2c3c9;"></div>
<svg style="position:absolute;left:483px;top:569px;" width="6" height="9" viewBox="0 0 6 9"><path d="M0 0V8L5 4Z" fill="#868999"/></svg>
<div class="t" style="left:516.4px;top:567px;font-size:12px;line-height:15px;color:#1e1e1e;transform:scaleX(0.8656);transform-origin:0 0;">Ln: 1</div>
<div class="t" style="left:558.4px;top:567px;font-size:12px;line-height:15px;color:#1e1e1e;transform:scaleX(0.8577);transform-origin:0 0;">Ch: 1</div>
<div class="t" style="left:603.7px;top:567px;font-size:12px;line-height:15px;color:#1e1e1e;transform:scaleX(0.7416);transform-origin:0 0;">SPC</div>
<div class="t" style="left:642.6px;top:567px;font-size:12px;line-height:15px;color:#1e1e1e;transform:scaleX(0.7851);transform-origin:0 0;">CRLF</div>
<div style="position:absolute;left:0;top:444px;width:658px;height:121px;overflow:hidden">
<div style="position:absolute;left:111px;top:0px;width:546px;height:17px;box-sizing:border-box;border:2px solid #e6e6eb"></div>
<svg style="position:absolute;left:102px;top:5px" width="10" height="6" viewBox="0 0 10 6"><path d="M0.7 0.7L5 5L9.3 0.7" fill="none" stroke="#1e1e1e" stroke-width="1.3"/></svg>
<svg style="position:absolute;left:102px;top:52px" width="10" height="6" viewBox="0 0 10 6"><path d="M0.7 0.7L5 5L9.3 0.7" fill="none" stroke="#1e1e1e" stroke-width="1.3"/></svg>
<div style="position:absolute;left:106px;top:15px;width:1px;height:35px;background:#9a9a9a"></div>
<div style="position:absolute;left:106px;top:62px;width:1px;height:53px;background:#9a9a9a"></div>
<div style="position:absolute;left:106px;top:97px;width:9px;height:1px;background:#9a9a9a"></div>
<div style="position:absolute;left:106px;top:114px;width:9px;height:1px;background:#9a9a9a"></div>
<div style="position:absolute;left:116px;top:36px;width:1px;height:61px;background:repeating-linear-gradient(to bottom,#a8a8a8 0 3px,transparent 3px 5px)"></div>
<svg style="position:absolute;left:19px;top:2px" width="17" height="16" viewBox="0 0 17 16"><path d="M5 1.3C3.7 1.3 3.5 2.3 3.5 3.5V6C3.5 7 3 7.3 2 7.3C3 7.3 3.5 7.6 3.5 8.6V11.2C3.5 12.3 3.7 13.3 5 13.3M11.3 1.3C12.3 1.3 12.7 1.8 12.7 3V6" fill="none" stroke="#1e1e1e" stroke-width="1"/><rect x="7.8" y="7.5" width="7" height="7" fill="#fff" stroke="#1e1e1e" stroke-width="1.3"/><path d="M9.8 12.5L12.8 9.5M10 9.5H12.8V12.3" fill="none" stroke="#1e1e1e" stroke-width="1.1"/></svg>
<svg style="position:absolute;left:72px;top:-2px" width="20" height="20" viewBox="0 0 20 20"><g transform="rotate(-45 8.2 13.5)"><rect x="3.7" y="10.6" width="9" height="5.8" rx="1.8" fill="#d3e6f7" stroke="#1a7fd4" stroke-width="1.1"/><path d="M10.3 10.6V16.4M5.5 12.6H9.5M5.5 14.4H9.5" stroke="#7fb3e6" stroke-width="0.7"/></g><path d="M11.3 10.2L15.5 5.8" stroke="#555" stroke-width="1.2"/><path d="M14.3 4.6L16.8 2.1L18.8 3.7L16.4 6.5Z" fill="#5a5a5a"/></svg>
<svg style="position:absolute;left:17px;top:46px" width="18" height="16" viewBox="0 0 18 16"><rect x="2" y="5" width="9" height="9" fill="#2277c0"/><circle cx="6.5" cy="9.5" r="3" fill="#2d80cc" stroke="#eef5fc" stroke-width="1"/><path d="M14.5 13.5V6M12.3 8.2L14.5 5.5L16.7 8.2" fill="none" stroke="#1e1e1e" stroke-width="1.2"/></svg>
<div class="t code num" style="left:66px;top:1px;color:#000">1</div>
<div class="t code" style="left:113.5px;top:0px"><span style="color:#0000ff">namespace</span><span style="color:#000000"> Company.Manager.Phenonmenon.Interface.Public</span></div>
<div class="t code num" style="left:66px;top:18px;">2</div>
<div class="t code" style="left:113.5px;top:17px"><span style="color:#000000">{</span></div>
<div class="t cl" style="left:143.98px;top:35px">0 references</div>
<div class="t code num" style="left:66px;top:48px;">3</div>
<div class="t code" style="left:113.5px;top:47px"><span style="color:#000000">    </span><span style="color:#0000ff">public</span><span style="color:#000000"> </span><span style="color:#0000ff">class</span><span style="color:#000000"> </span><span style="color:#2b91af">ObserveParallel</span><span style="color:#000000"> : ObserveRequestBase</span></div>
<div class="t code num" style="left:66px;top:65px;">4</div>
<div class="t code" style="left:113.5px;top:64px"><span style="color:#000000">    {</span></div>
<div class="t code num" style="left:66px;top:82px;">5</div>
<div class="t code" style="left:113.5px;top:81px"><span style="color:#000000">    }</span></div>
<div class="t code num" style="left:66px;top:99px;">6</div>
<div class="t code" style="left:113.5px;top:98px"><span style="color:#000000">}</span></div>
<div class="t code num" style="left:66px;top:116px;">7</div>
<div class="t code" style="left:113.5px;top:115px"><span style="color:#000000"></span></div>
</div>
<div style="position:absolute;left:0px;top:589px;width:140px;height:20px;background:#ccd5f0;"></div>
<div class="t" style="left:4.2px;top:593px;font-size:12px;line-height:15px;color:#0b1a60;font-weight:bold;transform:scaleX(0.9325);transform-origin:0 0;-webkit-text-stroke:0.25px #0b1a60;">ObserveLinear.cs</div>
<svg style="position:absolute;left:107px;top:596px;" width="10" height="10" viewBox="0 0 10 10"><path d="M0.8 4.5H4M4.5 0.8V8.2" stroke="#5a6b9e" stroke-width="1.2"/><rect x="4.9" y="2.3" width="4" height="4" fill="none" stroke="#5a6b9e" stroke-width="1.1"/><rect x="4.5" y="5" width="4.8" height="1.6" fill="#5a6b9e"/></svg>
<svg style="position:absolute;left:126px;top:596px;" width="11" height="9" viewBox="0 0 11 9"><path d="M0.8 0.6L9.6 8.2M9.6 0.6L0.8 8.2" stroke="#6478a8" stroke-width="1.4" fill="none"/></svg>
<svg style="position:absolute;left:666px;top:599px;" width="9" height="5" viewBox="0 0 9 5"><path d="M0 0H9L4.5 4.5Z" fill="#dfe3ef"/></svg>
<div style="position:absolute;left:0px;top:609px;width:677px;height:24px;background:#ccd5ee;"></div>
<div style="position:absolute;left:0px;top:611px;width:217px;height:21px;background:#f0f2fa;box-sizing:border-box;border:1px solid #8d98b8"></div>
<svg style="position:absolute;left:208px;top:621px;" width="6" height="4" viewBox="0 0 6 4"><path d="M0 0H6L3.0 3.0Z" fill="#1e1e1e"/></svg>
<div style="position:absolute;left:220px;top:611px;width:218px;height:21px;background:#f0f2fa;box-sizing:border-box;border:1px solid #8d98b8"></div>
<svg style="position:absolute;left:429px;top:621px;" width="6" height="4" viewBox="0 0 6 4"><path d="M0 0H6L3.0 3.0Z" fill="#1e1e1e"/></svg>
<div style="position:absolute;left:441px;top:611px;width:217px;height:21px;background:#f0f2fa;box-sizing:border-box;border:1px solid #8d98b8"></div>
<svg style="position:absolute;left:649px;top:621px;" width="6" height="4" viewBox="0 0 6 4"><path d="M0 0H6L3.0 3.0Z" fill="#1e1e1e"/></svg>
<div style="position:absolute;left:217px;top:611px;width:3px;height:21px;background:#93a2cc;"></div>
<div style="position:absolute;left:438px;top:611px;width:3px;height:21px;background:#93a2cc;"></div>
<div style="position:absolute;left:658px;top:611px;width:19px;height:21px;background:#e6eaf7;"></div>
<svg style="position:absolute;left:660px;top:613px;" width="14" height="16" viewBox="0 0 14 16"><path d="M1 7.3H13M1 9.7H13M7 3.5V7M7 10V13" stroke="#1e1e1e" stroke-width="1.1"/><path d="M4.6 4.6L7 1.8L9.4 4.6Z M4.6 12.4L7 15.2L9.4 12.4Z" fill="#1e1e1e"/></svg>
<svg style="position:absolute;left:4px;top:615px;" width="14" height="13" viewBox="0 0 14 13"><rect x="0.5" y="0.5" width="13" height="11" fill="#ececec" stroke="#404040"/><path d="M5.9 3.4C5.5 3 5 2.8 4.4 2.8C3.2 2.8 2.4 3.8 2.4 5.9C2.4 8 3.2 9 4.4 9C5 9 5.5 8.8 5.9 8.4" fill="none" stroke="#2b8a2b" stroke-width="1.4"/><path d="M8.4 2.8V9.2M10.6 2.8V9.2M7.2 4.8H11.8M7.2 7.1H11.8" stroke="#2b8a2b" stroke-width="1.2"/></svg>
<div class="t ui clip" style="left:21.5px;top:615px;width:181px">Company.Manager.Phenonmenor</div>
<svg style="position:absolute;left:221px;top:611px;" width="20" height="20" viewBox="0 0 20 20"><g fill="#ebebeb" stroke="#c8900a" stroke-width="1"><rect x="2.75" y="3.9" width="7.5" height="5" transform="rotate(-45 6.5 6.4)"/><rect x="13.2" y="7.15" width="4.2" height="3.5" transform="rotate(-45 15.3 8.9)"/><rect x="12.9" y="13.25" width="4.2" height="3.5" transform="rotate(45 15 15)"/></g><path d="M8.5 8.1H13M10.4 8.1V14.6H12.8" stroke="#c8900a" stroke-width="1.1" fill="none"/></svg>
<div class="t ui clip" style="left:241px;top:615px;width:182px">Company.Manager.Phenonmenor</div>
<div style="position:absolute;left:0px;top:633px;width:17px;height:118px;background:#e6e7ed;"></div>
<div style="position:absolute;left:17px;top:633px;width:641px;height:118px;background:#ffffff;"></div>
<div style="position:absolute;left:658px;top:633px;width:19px;height:118px;background:#e8e8ec;"></div>
<svg style="position:absolute;left:663px;top:639px;" width="10" height="6" viewBox="0 0 10 6"><path d="M0 5H9L4.5 0Z" fill="#868999"/></svg>
<div style="position:absolute;left:662px;top:650px;width:11px;height:39px;background:#c2c3c9;"></div>
<div style="position:absolute;left:658px;top:661px;width:19px;height:2px;background:#0000e0;"></div>
<svg style="position:absolute;left:663px;top:740px;" width="10" height="6" viewBox="0 0 10 6"><path d="M0 0H9L4.5 5Z" fill="#868999"/></svg>
<div style="position:absolute;left:0px;top:751px;width:677px;height:17px;background:#eeeef2;"></div>
<div style="position:absolute;left:0px;top:751px;width:60px;height:17px;background:#f0f2fa;box-sizing:border-box;border:1px solid #8d98b8"></div>
<div class="t" style="left:2.3px;top:753px;font-size:12px;line-height:15px;color:#1e1e1e;transform:scaleX(0.8641);transform-origin:0 0;">100 %</div>
<svg style="position:absolute;left:51px;top:758px;" width="6" height="4" viewBox="0 0 6 4"><path d="M0 0H6L3.0 3.0Z" fill="#1e1e1e"/></svg>
<svg style="position:absolute;left:58px;top:750px;" width="20" height="18" viewBox="0 0 20 18"><path d="M9.6 13C8.2 11.6 7.8 9.6 8.2 7.8C8.7 5.7 10.5 4.8 12.4 4.8C14.7 4.8 16.4 6.4 16.3 8.8C16.2 10.4 15.2 11.2 14.4 12.2V16.5" fill="none" stroke="#7b4fb5" stroke-width="1"/><circle cx="10.6" cy="9.2" r="0.7" fill="#7b4fb5"/><circle cx="13.5" cy="9.2" r="0.7" fill="#7b4fb5"/><path d="M12.4 10.5V13.5" stroke="#b9a0dc" stroke-width="1"/><path d="M11.6 16L7.8 12.2" stroke="#7b4fb5" stroke-width="1.8"/><path d="M8.5 12.4C6.7 13.3 4.7 12.1 5.1 10L6.9 11.7L8.3 10.4L6.6 9.1C8.5 8.7 9.8 10.6 8.5 12.4Z" fill="#7b4fb5"/></svg>
<svg style="position:absolute;left:103px;top:754px;" width="12" height="12" viewBox="0 0 12 12"><circle cx="5.6" cy="5.6" r="5.5" fill="#1f7a22"/><path d="M2.4 5.6L4.6 7.6L8 4.3" stroke="#fff" stroke-width="1.4" fill="none"/></svg>
<div class="t" style="left:119.3px;top:753px;font-size:12px;line-height:15px;color:#1e1e1e;transform:scaleX(0.9658);transform-origin:0 0;">No issues found</div>
<div style="position:absolute;left:261px;top:753px;width:1px;height:13px;background:#c2c3c9;"></div>
<svg style="position:absolute;left:272px;top:751px;" width="30" height="17" viewBox="0 0 30 17"><path d="M11.3 7.2L16.3 2.6" stroke="#2a2a2a" stroke-width="2"/><path d="M4.6 9.4L8.8 6.7L12.2 9.7L9.3 14.5Z" fill="#efe2b8" stroke="#c49018" stroke-width="1.4" stroke-linejoin="round"/><path d="M5.5 3.6L6 5L7.4 5.5L6 6L5.5 7.4L5 6L3.6 5.5L5 5Z" fill="#1a6fc0"/><path d="M9.4 2L9.9 3.3L11.2 3.8L9.9 4.3L9.4 5.6L8.9 4.3L7.6 3.8L8.9 3.3Z" fill="#0f5a9e"/><path d="M21 7H28L24.5 10.8Z" fill="#000"/></svg>
<svg style="position:absolute;left:330px;top:755px;" width="6" height="9" viewBox="0 0 6 9"><path d="M5 0V8L0 4Z" fill="#868999"/></svg>
<div style="position:absolute;left:341px;top:755px;width:113px;height:9px;background:#c2c3c9;"></div>
<svg style="position:absolute;left:477px;top:755px;" width="6" height="9" viewBox="0 0 6 9"><path d="M0 0V8L5 4Z" fill="#868999"/></svg>
<div class="t" style="left:510.5px;top:753px;font-size:12px;line-height:15px;color:#1e1e1e;transform:scaleX(0.8656);transform-origin:0 0;">Ln: 3</div>
<div class="t" style="left:552.5px;top:753px;font-size:12px;line-height:15px;color:#1e1e1e;transform:scaleX(0.8938);transform-origin:0 0;">Ch: 38</div>
<div class="t" style="left:603.7px;top:753px;font-size:12px;line-height:15px;color:#1e1e1e;transform:scaleX(0.7416);transform-origin:0 0;">SPC</div>
<div class="t" style="left:642.6px;top:753px;font-size:12px;line-height:15px;color:#1e1e1e;transform:scaleX(0.7851);transform-origin:0 0;">CRLF</div>
<div style="position:absolute;left:0;top:633px;width:658px;height:118px;overflow:hidden">
<div style="position:absolute;left:111px;top:47px;width:546px;height:17px;box-sizing:border-box;border:2px solid #e6e6eb"></div>
<div style="position:absolute;left:365.0px;top:49px;width:137.2px;height:14px;background:#e6ebd9"></div>
<svg style="position:absolute;left:102px;top:5px" width="10" height="6" viewBox="0 0 10 6"><path d="M0.7 0.7L5 5L9.3 0.7" fill="none" stroke="#1e1e1e" stroke-width="1.3"/></svg>
<svg style="position:absolute;left:102px;top:52px" width="10" height="6" viewBox="0 0 10 6"><path d="M0.7 0.7L5 5L9.3 0.7" fill="none" stroke="#1e1e1e" stroke-width="1.3"/></svg>
<div style="position:absolute;left:106px;top:15px;width:1px;height:35px;background:#9a9a9a"></div>
<div style="position:absolute;left:106px;top:62px;width:1px;height:53px;background:#9a9a9a"></div>
<div style="position:absolute;left:106px;top:97px;width:9px;height:1px;background:#9a9a9a"></div>
<div style="position:absolute;left:106px;top:114px;width:9px;height:1px;background:#9a9a9a"></div>
<div style="position:absolute;left:116px;top:36px;width:1px;height:61px;background:repeating-linear-gradient(to bottom,#a8a8a8 0 3px,transparent 3px 5px)"></div>
<svg style="position:absolute;left:19px;top:2px" width="17" height="16" viewBox="0 0 17 16"><path d="M5 1.3C3.7 1.3 3.5 2.3 3.5 3.5V6C3.5 7 3 7.3 2 7.3C3 7.3 3.5 7.6 3.5 8.6V11.2C3.5 12.3 3.7 13.3 5 13.3M11.3 1.3C12.3 1.3 12.7 1.8 12.7 3V6" fill="none" stroke="#1e1e1e" stroke-width="1"/><rect x="7.8" y="7.5" width="7" height="7" fill="#fff" stroke="#1e1e1e" stroke-width="1.3"/><path d="M9.8 12.5L12.8 9.5M10 9.5H12.8V12.3" fill="none" stroke="#1e1e1e" stroke-width="1.1"/></svg>
<svg style="position:absolute;left:72px;top:45px" width="20" height="20" viewBox="0 0 20 20"><g transform="rotate(-45 8.2 13.5)"><rect x="3.7" y="10.6" width="9" height="5.8" rx="1.8" fill="#d3e6f7" stroke="#1a7fd4" stroke-width="1.1"/><path d="M10.3 10.6V16.4M5.5 12.6H9.5M5.5 14.4H9.5" stroke="#7fb3e6" stroke-width="0.7"/></g><path d="M11.3 10.2L15.5 5.8" stroke="#555" stroke-width="1.2"/><path d="M14.3 4.6L16.8 2.1L18.8 3.7L16.4 6.5Z" fill="#5a5a5a"/></svg>
<svg style="position:absolute;left:17px;top:46px" width="18" height="16" viewBox="0 0 18 16"><rect x="2" y="5" width="9" height="9" fill="#2277c0"/><circle cx="6.5" cy="9.5" r="3" fill="#2d80cc" stroke="#eef5fc" stroke-width="1"/><path d="M14.5 13.5V6M12.3 8.2L14.5 5.5L16.7 8.2" fill="none" stroke="#1e1e1e" stroke-width="1.2"/></svg>
<div class="t code num" style="left:66px;top:1px;">1</div>
<div class="t code" style="left:113.5px;top:0px"><span style="color:#0000ff">namespace</span><span style="color:#000000"> Company.Manager.Phenonmenon.Interface.Partner</span></div>
<div class="t code num" style="left:66px;top:18px;">2</div>
<div class="t code" style="left:113.5px;top:17px"><span style="color:#000000">{</span></div>
<div class="t cl" style="left:143.98px;top:35px">0 references</div>
<div class="t code num" style="left:66px;top:48px;color:#000">3</div>
<div class="t code" style="left:113.5px;top:47px"><span style="color:#000000">    </span><span style="color:#0000ff">public</span><span style="color:#000000"> </span><span style="color:#0000ff">class</span><span style="color:#000000"> </span><span style="color:#2b91af">ObserveLinear</span><span style="color:#000000"> : ObserveRequestBase</span></div>
<div class="t code num" style="left:66px;top:65px;">4</div>
<div class="t code" style="left:113.5px;top:64px"><span style="color:#000000">    {</span></div>
<div class="t code num" style="left:66px;top:82px;">5</div>
<div class="t code" style="left:113.5px;top:81px"><span style="color:#000000">    }</span></div>
<div class="t code num" style="left:66px;top:99px;">6</div>
<div class="t code" style="left:113.5px;top:98px"><span style="color:#000000">}</span></div>
<div class="t code num" style="left:66px;top:116px;">7</div>
<div class="t code" style="left:113.5px;top:115px"><span style="color:#000000"></span></div>
</div>
<div style="position:absolute;left:0px;top:775px;width:180px;height:20px;background:#ccd5f0;"></div>
<div class="t" style="left:4.2px;top:779px;font-size:12px;line-height:15px;color:#0b1a60;font-weight:bold;transform:scaleX(0.9458);transform-origin:0 0;-webkit-text-stroke:0.25px #0b1a60;">ObserveRequestBase.cs</div>
<svg style="position:absolute;left:147px;top:782px;" width="10" height="10" viewBox="0 0 10 10"><path d="M0.8 4.5H4M4.5 0.8V8.2" stroke="#5a6b9e" stroke-width="1.2"/><rect x="4.9" y="2.3" width="4" height="4" fill="none" stroke="#5a6b9e" stroke-width="1.1"/><rect x="4.5" y="5" width="4.8" height="1.6" fill="#5a6b9e"/></svg>
<svg style="position:absolute;left:165px;top:782px;" width="11" height="9" viewBox="0 0 11 9"><path d="M0.8 0.6L9.6 8.2M9.6 0.6L0.8 8.2" stroke="#6478a8" stroke-width="1.4" fill="none"/></svg>
<svg style="position:absolute;left:666px;top:785px;" width="9" height="5" viewBox="0 0 9 5"><path d="M0 0H9L4.5 4.5Z" fill="#dfe3ef"/></svg>
<div style="position:absolute;left:0px;top:795px;width:677px;height:24px;background:#ccd5ee;"></div>
<div style="position:absolute;left:0px;top:797px;width:217px;height:21px;background:#f0f2fa;box-sizing:border-box;border:1px solid #8d98b8"></div>
<svg style="position:absolute;left:208px;top:807px;" width="6" height="4" viewBox="0 0 6 4"><path d="M0 0H6L3.0 3.0Z" fill="#1e1e1e"/></svg>
<div style="position:absolute;left:220px;top:797px;width:218px;height:21px;background:#f0f2fa;box-sizing:border-box;border:1px solid #8d98b8"></div>
<svg style="position:absolute;left:429px;top:807px;" width="6" height="4" viewBox="0 0 6 4"><path d="M0 0H6L3.0 3.0Z" fill="#1e1e1e"/></svg>
<div style="position:absolute;left:441px;top:797px;width:217px;height:21px;background:#f0f2fa;box-sizing:border-box;border:1px solid #8d98b8"></div>
<svg style="position:absolute;left:649px;top:807px;" width="6" height="4" viewBox="0 0 6 4"><path d="M0 0H6L3.0 3.0Z" fill="#1e1e1e"/></svg>
<div style="position:absolute;left:217px;top:797px;width:3px;height:21px;background:#93a2cc;"></div>
<div style="position:absolute;left:438px;top:797px;width:3px;height:21px;background:#93a2cc;"></div>
<div style="position:absolute;left:658px;top:797px;width:19px;height:21px;background:#e6eaf7;"></div>
<svg style="position:absolute;left:660px;top:799px;" width="14" height="16" viewBox="0 0 14 16"><path d="M1 7.3H13M1 9.7H13M7 3.5V7M7 10V13" stroke="#1e1e1e" stroke-width="1.1"/><path d="M4.6 4.6L7 1.8L9.4 4.6Z M4.6 12.4L7 15.2L9.4 12.4Z" fill="#1e1e1e"/></svg>
<svg style="position:absolute;left:4px;top:801px;" width="14" height="13" viewBox="0 0 14 13"><rect x="0.5" y="0.5" width="13" height="11" fill="#ececec" stroke="#404040"/><path d="M5.9 3.4C5.5 3 5 2.8 4.4 2.8C3.2 2.8 2.4 3.8 2.4 5.9C2.4 8 3.2 9 4.4 9C5 9 5.5 8.8 5.9 8.4" fill="none" stroke="#2b8a2b" stroke-width="1.4"/><path d="M8.4 2.8V9.2M10.6 2.8V9.2M7.2 4.8H11.8M7.2 7.1H11.8" stroke="#2b8a2b" stroke-width="1.2"/></svg>
<div class="t ui clip" style="left:21.5px;top:801px;width:181px">Company.Manager.Phenonmenor</div>
<svg style="position:absolute;left:221px;top:797px;" width="20" height="20" viewBox="0 0 20 20"><g fill="#ebebeb" stroke="#c8900a" stroke-width="1"><rect x="2.75" y="3.9" width="7.5" height="5" transform="rotate(-45 6.5 6.4)"/><rect x="13.2" y="7.15" width="4.2" height="3.5" transform="rotate(-45 15.3 8.9)"/><rect x="12.9" y="13.25" width="4.2" height="3.5" transform="rotate(45 15 15)"/></g><path d="M8.5 8.1H13M10.4 8.1V14.6H12.8" stroke="#c8900a" stroke-width="1.1" fill="none"/></svg>
<div class="t ui clip" style="left:241px;top:801px;width:182px">Company.Manager.Phenonmenor</div>
<div style="position:absolute;left:0px;top:819px;width:17px;height:102px;background:#e6e7ed;"></div>
<div style="position:absolute;left:17px;top:819px;width:641px;height:102px;background:#ffffff;"></div>
<div style="position:absolute;left:658px;top:819px;width:19px;height:102px;background:#e8e8ec;"></div>
<svg style="position:absolute;left:663px;top:825px;" width="10" height="6" viewBox="0 0 10 6"><path d="M0 5H9L4.5 0Z" fill="#868999"/></svg>
<div style="position:absolute;left:662px;top:837px;width:11px;height:33px;background:#c2c3c9;"></div>
<div style="position:absolute;left:658px;top:834px;width:19px;height:2px;background:#0000e0;"></div>
<svg style="position:absolute;left:663px;top:909px;" width="10" height="6" viewBox="0 0 10 6"><path d="M0 0H9L4.5 5Z" fill="#868999"/></svg>
<div style="position:absolute;left:0px;top:921px;width:677px;height:17px;background:#eeeef2;"></div>
<div style="position:absolute;left:0px;top:921px;width:60px;height:17px;background:#f0f2fa;box-sizing:border-box;border:1px solid #8d98b8"></div>
<div class="t" style="left:2.3px;top:923px;font-size:12px;line-height:15px;color:#1e1e1e;transform:scaleX(0.8641);transform-origin:0 0;">100 %</div>
<svg style="position:absolute;left:51px;top:928px;" width="6" height="4" viewBox="0 0 6 4"><path d="M0 0H6L3.0 3.0Z" fill="#1e1e1e"/></svg>
<svg style="position:absolute;left:58px;top:920px;" width="20" height="18" viewBox="0 0 20 18"><path d="M9.6 13C8.2 11.6 7.8 9.6 8.2 7.8C8.7 5.7 10.5 4.8 12.4 4.8C14.7 4.8 16.4 6.4 16.3 8.8C16.2 10.4 15.2 11.2 14.4 12.2V16.5" fill="none" stroke="#7b4fb5" stroke-width="1"/><circle cx="10.6" cy="9.2" r="0.7" fill="#7b4fb5"/><circle cx="13.5" cy="9.2" r="0.7" fill="#7b4fb5"/><path d="M12.4 10.5V13.5" stroke="#b9a0dc" stroke-width="1"/><path d="M11.6 16L7.8 12.2" stroke="#7b4fb5" stroke-width="1.8"/><path d="M8.5 12.4C6.7 13.3 4.7 12.1 5.1 10L6.9 11.7L8.3 10.4L6.6 9.1C8.5 8.7 9.8 10.6 8.5 12.4Z" fill="#7b4fb5"/></svg>
<svg style="position:absolute;left:103px;top:924px;" width="12" height="12" viewBox="0 0 12 12"><circle cx="5.6" cy="5.6" r="5.5" fill="#1f7a22"/><path d="M2.4 5.6L4.6 7.6L8 4.3" stroke="#fff" stroke-width="1.4" fill="none"/></svg>
<div class="t" style="left:119.3px;top:923px;font-size:12px;line-height:15px;color:#1e1e1e;transform:scaleX(0.9658);transform-origin:0 0;">No issues found</div>
<div style="position:absolute;left:261px;top:923px;width:1px;height:13px;background:#c2c3c9;"></div>
<svg style="position:absolute;left:272px;top:921px;" width="30" height="17" viewBox="0 0 30 17"><path d="M11.3 7.2L16.3 2.6" stroke="#2a2a2a" stroke-width="2"/><path d="M4.6 9.4L8.8 6.7L12.2 9.7L9.3 14.5Z" fill="#efe2b8" stroke="#c49018" stroke-width="1.4" stroke-linejoin="round"/><path d="M5.5 3.6L6 5L7.4 5.5L6 6L5.5 7.4L5 6L3.6 5.5L5 5Z" fill="#1a6fc0"/><path d="M9.4 2L9.9 3.3L11.2 3.8L9.9 4.3L9.4 5.6L8.9 4.3L7.6 3.8L8.9 3.3Z" fill="#0f5a9e"/><path d="M21 7H28L24.5 10.8Z" fill="#000"/></svg>
<svg style="position:absolute;left:330px;top:925px;" width="6" height="9" viewBox="0 0 6 9"><path d="M5 0V8L0 4Z" fill="#868999"/></svg>
<div style="position:absolute;left:341px;top:925px;width:131px;height:9px;background:#c2c3c9;"></div>
<svg style="position:absolute;left:483px;top:925px;" width="6" height="9" viewBox="0 0 6 9"><path d="M0 0V8L5 4Z" fill="#868999"/></svg>
<div class="t" style="left:516.4px;top:923px;font-size:12px;line-height:15px;color:#1e1e1e;transform:scaleX(0.8656);transform-origin:0 0;">Ln: 1</div>
<div class="t" style="left:558.4px;top:923px;font-size:12px;line-height:15px;color:#1e1e1e;transform:scaleX(0.8577);transform-origin:0 0;">Ch: 1</div>
<div class="t" style="left:603.7px;top:923px;font-size:12px;line-height:15px;color:#1e1e1e;transform:scaleX(0.7416);transform-origin:0 0;">SPC</div>
<div class="t" style="left:642.6px;top:923px;font-size:12px;line-height:15px;color:#1e1e1e;transform:scaleX(0.7851);transform-origin:0 0;">CRLF</div>
<div style="position:absolute;left:0;top:819px;width:658px;height:102px;overflow:hidden">
<div style="position:absolute;left:111px;top:0px;width:546px;height:17px;box-sizing:border-box;border:2px solid #e6e6eb"></div>
<svg style="position:absolute;left:102px;top:5px" width="10" height="6" viewBox="0 0 10 6"><path d="M0.7 0.7L5 5L9.3 0.7" fill="none" stroke="#1e1e1e" stroke-width="1.3"/></svg>
<svg style="position:absolute;left:102px;top:52px" width="10" height="6" viewBox="0 0 10 6"><path d="M0.7 0.7L5 5L9.3 0.7" fill="none" stroke="#1e1e1e" stroke-width="1.3"/></svg>
<div style="position:absolute;left:106px;top:15px;width:1px;height:35px;background:#9a9a9a"></div>
<div style="position:absolute;left:106px;top:62px;width:1px;height:53px;background:#9a9a9a"></div>
<div style="position:absolute;left:106px;top:97px;width:9px;height:1px;background:#9a9a9a"></div>
<div style="position:absolute;left:106px;top:114px;width:9px;height:1px;background:#9a9a9a"></div>
<div style="position:absolute;left:116px;top:36px;width:1px;height:61px;background:repeating-linear-gradient(to bottom,#a8a8a8 0 3px,transparent 3px 5px)"></div>
<svg style="position:absolute;left:19px;top:2px" width="17" height="16" viewBox="0 0 17 16"><path d="M5 1.3C3.7 1.3 3.5 2.3 3.5 3.5V6C3.5 7 3 7.3 2 7.3C3 7.3 3.5 7.6 3.5 8.6V11.2C3.5 12.3 3.7 13.3 5 13.3M11.3 1.3C12.3 1.3 12.7 1.8 12.7 3V6" fill="none" stroke="#1e1e1e" stroke-width="1"/><rect x="7.8" y="7.5" width="7" height="7" fill="#fff" stroke="#1e1e1e" stroke-width="1.3"/><path d="M9.8 12.5L12.8 9.5M10 9.5H12.8V12.3" fill="none" stroke="#1e1e1e" stroke-width="1.1"/></svg>
<svg style="position:absolute;left:72px;top:-2px" width="20" height="20" viewBox="0 0 20 20"><g transform="rotate(-45 8.2 13.5)"><rect x="3.7" y="10.6" width="9" height="5.8" rx="1.8" fill="#d3e6f7" stroke="#1a7fd4" stroke-width="1.1"/><path d="M10.3 10.6V16.4M5.5 12.6H9.5M5.5 14.4H9.5" stroke="#7fb3e6" stroke-width="0.7"/></g><path d="M11.3 10.2L15.5 5.8" stroke="#555" stroke-width="1.2"/><path d="M14.3 4.6L16.8 2.1L18.8 3.7L16.4 6.5Z" fill="#5a5a5a"/></svg>
<svg style="position:absolute;left:17px;top:46px" width="18" height="16" viewBox="0 0 18 16"><rect x="2" y="5" width="9" height="9" fill="#2277c0"/><circle cx="6.5" cy="9.5" r="3" fill="#2d80cc" stroke="#eef5fc" stroke-width="1"/><path d="M14.5 5V12.8M12.3 10.3L14.5 13L16.7 10.3" fill="none" stroke="#1e1e1e" stroke-width="1.2"/></svg>
<div class="t code num" style="left:66px;top:1px;color:#000">1</div>
<div class="t code" style="left:113.5px;top:0px"><span style="color:#0000ff">namespace</span><span style="color:#000000"> Company.Manager.Phenonmenon.Interface</span></div>
<div class="t code num" style="left:66px;top:18px;">2</div>
<div class="t code" style="left:113.5px;top:17px"><span style="color:#000000">{</span></div>
<div class="t cl" style="left:143.98px;top:35px">4 references</div>
<div class="t code num" style="left:66px;top:48px;">3</div>
<div class="t code" style="left:113.5px;top:47px"><span style="color:#000000">    </span><span style="color:#0000ff">public</span><span style="color:#000000"> </span><span style="color:#0000ff">abstract</span><span style="color:#000000"> </span><span style="color:#0000ff">class</span><span style="color:#000000"> </span><span style="color:#2b91af">ObserveRequestBase</span></div>
<div class="t code num" style="left:66px;top:65px;">4</div>
<div class="t code" style="left:113.5px;top:64px"><span style="color:#000000">    {</span></div>
<div class="t code num" style="left:66px;top:82px;">5</div>
<div class="t code" style="left:113.5px;top:81px"><span style="color:#000000">    }</span></div>
<div class="t code num" style="left:66px;top:99px;">6</div>
<div class="t code" style="left:113.5px;top:98px"><span style="color:#000000">}</span></div>
</div>
<div style="position:absolute;left:685px;top:1px;width:361px;height:21px;background:#f5cc84;"></div>
<div class="t" style="left:689.3px;top:5px;font-size:12px;line-height:15px;color:#1e1e1e;transform:scaleX(0.9838);transform-origin:0 0;">Solution Explorer</div>
<div style="position:absolute;left:685px;top:22px;width:361px;height:51px;background:#ccd5f0;"></div>
<div style="position:absolute;left:685px;top:73px;width:361px;height:865px;background:#f6f7fb;"></div>
<div style="position:absolute;left:687px;top:50px;width:359px;height:21px;background:#ffffff;box-sizing:border-box;border:1px solid #a4a8b8"></div>
<div class="t" style="left:692.2px;top:54px;font-size:12px;line-height:15px;color:#6d6d6d;transform:scaleX(0.9708);transform-origin:0 0;">Search Solution Explorer (Ctrl+;)</div>
<div style="position:absolute;left:685px;top:73px;width:361px;height:19px;background:#c4d5f8;box-sizing:border-box;border-top:1px solid #2b3d7a;border-bottom:1px solid #2b3d7a"></div>
<svg style="position:absolute;left:700px;top:76px;" width="16" height="16" viewBox="0 0 16 16"><rect x="0.5" y="0.5" width="13" height="3" rx="0.8" fill="#c4d5f8" stroke="#2a2a2a"/><path d="M0.8 3.5V12.5H4" fill="none" stroke="#555"/><path d="M14 4.5L10 7.5V11.5L14 14.5Z M12.6 7.3V12.1L10.5 9.7Z" fill="#7b4fb5" fill-rule="evenodd"/><path d="M4.6 7.5L5.8 7L10 9.7L5.8 12.4L4.6 11.9Z M5.8 8.7V10.7L7.2 9.7Z" fill="#7b4fb5" fill-rule="evenodd"/></svg>
<div class="t" style="left:720px;top:76px;font-size:12px;line-height:15px;color:#1e1e1e;transform:scaleX(0.9917);transform-origin:0 0;">Solution &#x27;Company&#x27; (27 of 27 projects)</div>
<svg style="position:absolute;left:695px;top:98px;" width="8" height="8" viewBox="0 0 8 8"><path d="M7.5 0.5V7H0.5Z" fill="#1e1e1e"/></svg>
<svg style="position:absolute;left:718px;top:95px;" width="15" height="12" viewBox="0 0 15 12"><path d="M0.5 1.5H6L7 2.5H14.5V11.5H0.5Z" fill="#dcb67a" stroke="#b8860b" stroke-width="1"/><path d="M0.5 3.5H14.5" stroke="#b8860b" stroke-width="1"/></svg>
<div class="t" style="left:738px;top:95px;font-size:12px;line-height:15px;color:#1e1e1e;transform:scaleX(1.0140);transform-origin:0 0;">Component</div>
<svg style="position:absolute;left:714px;top:116px;" width="6" height="10" viewBox="0 0 6 10"><path d="M0.7 0.8L5.2 5L0.7 9.2Z" fill="none" stroke="#1e1e1e" stroke-width="1.1"/></svg>
<svg style="position:absolute;left:736px;top:114px;" width="15" height="12" viewBox="0 0 15 12"><path d="M0.5 1.5H6L7 2.5H14.5V11.5H0.5Z" fill="#dcb67a" stroke="#b8860b" stroke-width="1"/><path d="M0.5 3.5H14.5" stroke="#b8860b" stroke-width="1"/></svg>
<div class="t" style="left:756px;top:114px;font-size:12px;line-height:15px;color:#1e1e1e;transform:scaleX(0.9230);transform-origin:0 0;">Access</div>
<svg style="position:absolute;left:714px;top:135px;" width="6" height="10" viewBox="0 0 6 10"><path d="M0.7 0.8L5.2 5L0.7 9.2Z" fill="none" stroke="#1e1e1e" stroke-width="1.1"/></svg>
<svg style="position:absolute;left:736px;top:133px;" width="15" height="12" viewBox="0 0 15 12"><path d="M0.5 1.5H6L7 2.5H14.5V11.5H0.5Z" fill="#dcb67a" stroke="#b8860b" stroke-width="1"/><path d="M0.5 3.5H14.5" stroke="#b8860b" stroke-width="1"/></svg>
<div class="t" style="left:756px;top:133px;font-size:12px;line-height:15px;color:#1e1e1e;transform:scaleX(0.9555);transform-origin:0 0;">Engine</div>
<svg style="position:absolute;left:713px;top:155px;" width="8" height="8" viewBox="0 0 8 8"><path d="M7.5 0.5V7H0.5Z" fill="#1e1e1e"/></svg>
<svg style="position:absolute;left:736px;top:152px;" width="15" height="12" viewBox="0 0 15 12"><path d="M0.5 1.5H6L7 2.5H14.5V11.5H0.5Z" fill="#dcb67a" stroke="#b8860b" stroke-width="1"/><path d="M0.5 3.5H14.5" stroke="#b8860b" stroke-width="1"/></svg>
<div class="t" style="left:756px;top:152px;font-size:12px;line-height:15px;color:#1e1e1e;transform:scaleX(0.9925);transform-origin:0 0;">Manager</div>
<svg style="position:absolute;left:732px;top:173px;" width="6" height="10" viewBox="0 0 6 10"><path d="M0.7 0.8L5.2 5L0.7 9.2Z" fill="none" stroke="#1e1e1e" stroke-width="1.1"/></svg>
<svg style="position:absolute;left:754px;top:171px;" width="15" height="12" viewBox="0 0 15 12"><path d="M0.5 1.5H6L7 2.5H14.5V11.5H0.5Z" fill="#dcb67a" stroke="#b8860b" stroke-width="1"/><path d="M0.5 3.5H14.5" stroke="#b8860b" stroke-width="1"/></svg>
<div class="t" style="left:774px;top:171px;font-size:12px;line-height:15px;color:#1e1e1e;transform:scaleX(0.9851);transform-origin:0 0;">Analytics</div>
<svg style="position:absolute;left:732px;top:192px;" width="6" height="10" viewBox="0 0 6 10"><path d="M0.7 0.8L5.2 5L0.7 9.2Z" fill="none" stroke="#1e1e1e" stroke-width="1.1"/></svg>
<svg style="position:absolute;left:754px;top:190px;" width="15" height="12" viewBox="0 0 15 12"><path d="M0.5 1.5H6L7 2.5H14.5V11.5H0.5Z" fill="#dcb67a" stroke="#b8860b" stroke-width="1"/><path d="M0.5 3.5H14.5" stroke="#b8860b" stroke-width="1"/></svg>
<div class="t" style="left:774px;top:190px;font-size:12px;line-height:15px;color:#1e1e1e;transform:scaleX(0.8812);transform-origin:0 0;">Feed</div>
<svg style="position:absolute;left:731px;top:212px;" width="8" height="8" viewBox="0 0 8 8"><path d="M7.5 0.5V7H0.5Z" fill="#1e1e1e"/></svg>
<svg style="position:absolute;left:754px;top:209px;" width="15" height="12" viewBox="0 0 15 12"><path d="M0.5 1.5H6L7 2.5H14.5V11.5H0.5Z" fill="#dcb67a" stroke="#b8860b" stroke-width="1"/><path d="M0.5 3.5H14.5" stroke="#b8860b" stroke-width="1"/></svg>
<div class="t" style="left:774px;top:209px;font-size:12px;line-height:15px;color:#1e1e1e;transform:scaleX(1.0044);transform-origin:0 0;">Phenonmenon</div>
<svg style="position:absolute;left:749px;top:231px;" width="8" height="8" viewBox="0 0 8 8"><path d="M7.5 0.5V7H0.5Z" fill="#1e1e1e"/></svg>
<svg style="position:absolute;left:772px;top:228px;" width="14" height="13" viewBox="0 0 14 13"><rect x="0.5" y="0.5" width="13" height="11" fill="#ececec" stroke="#404040"/><path d="M5.9 3.4C5.5 3 5 2.8 4.4 2.8C3.2 2.8 2.4 3.8 2.4 5.9C2.4 8 3.2 9 4.4 9C5 9 5.5 8.8 5.9 8.4" fill="none" stroke="#2b8a2b" stroke-width="1.4"/><path d="M8.4 2.8V9.2M10.6 2.8V9.2M7.2 4.8H11.8M7.2 7.1H11.8" stroke="#2b8a2b" stroke-width="1.2"/></svg>
<div class="t" style="left:792px;top:228px;font-size:12px;line-height:15px;color:#1e1e1e;transform:scaleX(1.0013);transform-origin:0 0;">Company.Manager.Phenonmenon.Interface</div>
<svg style="position:absolute;left:768px;top:249px;" width="6" height="10" viewBox="0 0 6 10"><path d="M0.7 0.8L5.2 5L0.7 9.2Z" fill="none" stroke="#1e1e1e" stroke-width="1.1"/></svg>
<svg style="position:absolute;left:790px;top:248px;" width="16" height="11" viewBox="0 0 16 11"><g fill="none" stroke="#1e1e1e" stroke-width="1"><rect x="0.5" y="5.5" width="4" height="4"/><rect x="9.5" y="0.5" width="5" height="5"/><rect x="8.5" y="5.5" width="5" height="5" fill="#f6f7fb"/><path d="M2.5 5.5V3H9.5"/></g></svg>
<div class="t" style="left:810px;top:247px;font-size:12px;line-height:15px;color:#1e1e1e;transform:scaleX(0.9489);transform-origin:0 0;">Dependencies</div>
<svg style="position:absolute;left:767px;top:269px;" width="8" height="8" viewBox="0 0 8 8"><path d="M7.5 0.5V7H0.5Z" fill="#1e1e1e"/></svg>
<svg style="position:absolute;left:790px;top:266px;" width="15" height="12" viewBox="0 0 15 12"><path d="M0.5 1.5H6L7 2.5H14.5V11.5H0.5Z" fill="#dcb67a" stroke="#b8860b" stroke-width="1"/><path d="M0.5 3.5H14.5" stroke="#b8860b" stroke-width="1"/></svg>
<div class="t" style="left:810px;top:266px;font-size:12px;line-height:15px;color:#1e1e1e;transform:scaleX(1.0333);transform-origin:0 0;">Common</div>
<svg style="position:absolute;left:786px;top:287px;" width="6" height="10" viewBox="0 0 6 10"><path d="M0.7 0.8L5.2 5L0.7 9.2Z" fill="none" stroke="#1e1e1e" stroke-width="1.1"/></svg>
<svg style="position:absolute;left:808px;top:282px;" width="16" height="18" viewBox="0 0 16 18"><path d="M5.9 7.1C5.4 6.4 4.6 6 3.7 6C2 6 0.9 7.6 0.9 10C0.9 12.4 2 14 3.7 14C4.6 14 5.4 13.6 5.9 12.9" fill="none" stroke="#2b8a2b" stroke-width="1.5"/><path d="M10 6.3V12M12.6 6.3V12M8.3 8.1H14.2M8.3 10.5H14.2" stroke="#2b8a2b" stroke-width="1.1"/></svg>
<div class="t" style="left:828px;top:285px;font-size:12px;line-height:15px;color:#1e1e1e;transform:scaleX(0.9222);transform-origin:0 0;">ObserveRequestBase.cs</div>
<svg style="position:absolute;left:786px;top:306px;" width="6" height="10" viewBox="0 0 6 10"><path d="M0.7 0.8L5.2 5L0.7 9.2Z" fill="none" stroke="#1e1e1e" stroke-width="1.1"/></svg>
<svg style="position:absolute;left:808px;top:301px;" width="16" height="18" viewBox="0 0 16 18"><path d="M5.9 7.1C5.4 6.4 4.6 6 3.7 6C2 6 0.9 7.6 0.9 10C0.9 12.4 2 14 3.7 14C4.6 14 5.4 13.6 5.9 12.9" fill="none" stroke="#2b8a2b" stroke-width="1.5"/><path d="M10 6.3V12M12.6 6.3V12M8.3 8.1H14.2M8.3 10.5H14.2" stroke="#2b8a2b" stroke-width="1.1"/></svg>
<div class="t" style="left:828px;top:304px;font-size:12px;line-height:15px;color:#1e1e1e;transform:scaleX(0.9179);transform-origin:0 0;">ObserveResponseBase.cs</div>
<svg style="position:absolute;left:767px;top:326px;" width="8" height="8" viewBox="0 0 8 8"><path d="M7.5 0.5V7H0.5Z" fill="#1e1e1e"/></svg>
<svg style="position:absolute;left:790px;top:323px;" width="15" height="12" viewBox="0 0 15 12"><path d="M0.5 1.5H6L7 2.5H14.5V11.5H0.5Z" fill="#dcb67a" stroke="#b8860b" stroke-width="1"/><path d="M0.5 3.5H14.5" stroke="#b8860b" stroke-width="1"/></svg>
<div class="t" style="left:810px;top:323px;font-size:12px;line-height:15px;color:#1e1e1e;transform:scaleX(0.9581);transform-origin:0 0;">Partner</div>
<svg style="position:absolute;left:786px;top:344px;" width="6" height="10" viewBox="0 0 6 10"><path d="M0.7 0.8L5.2 5L0.7 9.2Z" fill="none" stroke="#1e1e1e" stroke-width="1.1"/></svg>
<svg style="position:absolute;left:808px;top:339px;" width="16" height="18" viewBox="0 0 16 18"><path d="M5.9 7.1C5.4 6.4 4.6 6 3.7 6C2 6 0.9 7.6 0.9 10C0.9 12.4 2 14 3.7 14C4.6 14 5.4 13.6 5.9 12.9" fill="none" stroke="#2b8a2b" stroke-width="1.5"/><path d="M10 6.3V12M12.6 6.3V12M8.3 8.1H14.2M8.3 10.5H14.2" stroke="#2b8a2b" stroke-width="1.1"/></svg>
<div class="t" style="left:828px;top:342px;font-size:12px;line-height:15px;color:#1e1e1e;transform:scaleX(0.9503);transform-origin:0 0;">ObservationResponse.cs</div>
<svg style="position:absolute;left:786px;top:363px;" width="6" height="10" viewBox="0 0 6 10"><path d="M0.7 0.8L5.2 5L0.7 9.2Z" fill="none" stroke="#1e1e1e" stroke-width="1.1"/></svg>
<svg style="position:absolute;left:808px;top:358px;" width="16" height="18" viewBox="0 0 16 18"><path d="M5.9 7.1C5.4 6.4 4.6 6 3.7 6C2 6 0.9 7.6 0.9 10C0.9 12.4 2 14 3.7 14C4.6 14 5.4 13.6 5.9 12.9" fill="none" stroke="#2b8a2b" stroke-width="1.5"/><path d="M10 6.3V12M12.6 6.3V12M8.3 8.1H14.2M8.3 10.5H14.2" stroke="#2b8a2b" stroke-width="1.1"/></svg>
<div class="t" style="left:828px;top:361px;font-size:12px;line-height:15px;color:#1e1e1e;transform:scaleX(0.9456);transform-origin:0 0;">ObserveLinear.cs</div>
<svg style="position:absolute;left:767px;top:383px;" width="8" height="8" viewBox="0 0 8 8"><path d="M7.5 0.5V7H0.5Z" fill="#1e1e1e"/></svg>
<svg style="position:absolute;left:790px;top:380px;" width="15" height="12" viewBox="0 0 15 12"><path d="M0.5 1.5H6L7 2.5H14.5V11.5H0.5Z" fill="#dcb67a" stroke="#b8860b" stroke-width="1"/><path d="M0.5 3.5H14.5" stroke="#b8860b" stroke-width="1"/></svg>
<div class="t" style="left:810px;top:380px;font-size:12px;line-height:15px;color:#1e1e1e;transform:scaleX(0.9822);transform-origin:0 0;">Public</div>
<svg style="position:absolute;left:786px;top:401px;" width="6" height="10" viewBox="0 0 6 10"><path d="M0.7 0.8L5.2 5L0.7 9.2Z" fill="none" stroke="#1e1e1e" stroke-width="1.1"/></svg>
<svg style="position:absolute;left:808px;top:396px;" width="16" height="18" viewBox="0 0 16 18"><path d="M5.9 7.1C5.4 6.4 4.6 6 3.7 6C2 6 0.9 7.6 0.9 10C0.9 12.4 2 14 3.7 14C4.6 14 5.4 13.6 5.9 12.9" fill="none" stroke="#2b8a2b" stroke-width="1.5"/><path d="M10 6.3V12M12.6 6.3V12M8.3 8.1H14.2M8.3 10.5H14.2" stroke="#2b8a2b" stroke-width="1.1"/></svg>
<div class="t" style="left:828px;top:399px;font-size:12px;line-height:15px;color:#1e1e1e;transform:scaleX(0.9503);transform-origin:0 0;">ObservationResponse.cs</div>
<svg style="position:absolute;left:786px;top:420px;" width="6" height="10" viewBox="0 0 6 10"><path d="M0.7 0.8L5.2 5L0.7 9.2Z" fill="none" stroke="#1e1e1e" stroke-width="1.1"/></svg>
<svg style="position:absolute;left:808px;top:415px;" width="16" height="18" viewBox="0 0 16 18"><path d="M5.9 7.1C5.4 6.4 4.6 6 3.7 6C2 6 0.9 7.6 0.9 10C0.9 12.4 2 14 3.7 14C4.6 14 5.4 13.6 5.9 12.9" fill="none" stroke="#2b8a2b" stroke-width="1.5"/><path d="M10 6.3V12M12.6 6.3V12M8.3 8.1H14.2M8.3 10.5H14.2" stroke="#2b8a2b" stroke-width="1.1"/></svg>
<div class="t" style="left:828px;top:418px;font-size:12px;line-height:15px;color:#1e1e1e;transform:scaleX(0.9456);transform-origin:0 0;">ObserveLinear.cs</div>
<svg style="position:absolute;left:786px;top:439px;" width="6" height="10" viewBox="0 0 6 10"><path d="M0.7 0.8L5.2 5L0.7 9.2Z" fill="none" stroke="#1e1e1e" stroke-width="1.1"/></svg>
<svg style="position:absolute;left:808px;top:434px;" width="16" height="18" viewBox="0 0 16 18"><path d="M5.9 7.1C5.4 6.4 4.6 6 3.7 6C2 6 0.9 7.6 0.9 10C0.9 12.4 2 14 3.7 14C4.6 14 5.4 13.6 5.9 12.9" fill="none" stroke="#2b8a2b" stroke-width="1.5"/><path d="M10 6.3V12M12.6 6.3V12M8.3 8.1H14.2M8.3 10.5H14.2" stroke="#2b8a2b" stroke-width="1.1"/></svg>
<div class="t" style="left:828px;top:437px;font-size:12px;line-height:15px;color:#1e1e1e;transform:scaleX(0.9364);transform-origin:0 0;">ObserveParallel.cs</div>
<svg style="position:absolute;left:768px;top:458px;" width="6" height="10" viewBox="0 0 6 10"><path d="M0.7 0.8L5.2 5L0.7 9.2Z" fill="none" stroke="#1e1e1e" stroke-width="1.1"/></svg>
<svg style="position:absolute;left:790px;top:453px;" width="16" height="18" viewBox="0 0 16 18"><path d="M5.9 7.1C5.4 6.4 4.6 6 3.7 6C2 6 0.9 7.6 0.9 10C0.9 12.4 2 14 3.7 14C4.6 14 5.4 13.6 5.9 12.9" fill="none" stroke="#2b8a2b" stroke-width="1.5"/><path d="M10 6.3V12M12.6 6.3V12M8.3 8.1H14.2M8.3 10.5H14.2" stroke="#2b8a2b" stroke-width="1.1"/></svg>
<div class="t" style="left:810px;top:456px;font-size:12px;line-height:15px;color:#1e1e1e;transform:scaleX(0.9964);transform-origin:0 0;">IPhenonmenonManager.cs</div>
<svg style="position:absolute;left:750px;top:477px;" width="6" height="10" viewBox="0 0 6 10"><path d="M0.7 0.8L5.2 5L0.7 9.2Z" fill="none" stroke="#1e1e1e" stroke-width="1.1"/></svg>
<svg style="position:absolute;left:772px;top:475px;" width="14" height="13" viewBox="0 0 14 13"><rect x="0.5" y="0.5" width="13" height="11" fill="#ececec" stroke="#404040"/><path d="M5.9 3.4C5.5 3 5 2.8 4.4 2.8C3.2 2.8 2.4 3.8 2.4 5.9C2.4 8 3.2 9 4.4 9C5 9 5.5 8.8 5.9 8.4" fill="none" stroke="#2b8a2b" stroke-width="1.4"/><path d="M8.4 2.8V9.2M10.6 2.8V9.2M7.2 4.8H11.8M7.2 7.1H11.8" stroke="#2b8a2b" stroke-width="1.2"/></svg>
<div class="t" style="left:792px;top:475px;font-size:12px;line-height:15px;color:#1e1e1e;transform:scaleX(0.9914);transform-origin:0 0;">Company.Manager.Phenonmenon.Service</div>
<svg style="position:absolute;left:714px;top:496px;" width="6" height="10" viewBox="0 0 6 10"><path d="M0.7 0.8L5.2 5L0.7 9.2Z" fill="none" stroke="#1e1e1e" stroke-width="1.1"/></svg>
<svg style="position:absolute;left:736px;top:494px;" width="15" height="12" viewBox="0 0 15 12"><path d="M0.5 1.5H6L7 2.5H14.5V11.5H0.5Z" fill="#dcb67a" stroke="#b8860b" stroke-width="1"/><path d="M0.5 3.5H14.5" stroke="#b8860b" stroke-width="1"/></svg>
<div class="t" style="left:756px;top:494px;font-size:12px;line-height:15px;color:#1e1e1e;transform:scaleX(1.0364);transform-origin:0 0;">Utility</div>
<svg style="position:absolute;left:696px;top:515px;" width="6" height="10" viewBox="0 0 6 10"><path d="M0.7 0.8L5.2 5L0.7 9.2Z" fill="none" stroke="#1e1e1e" stroke-width="1.1"/></svg>
<svg style="position:absolute;left:718px;top:513px;" width="15" height="12" viewBox="0 0 15 12"><path d="M0.5 1.5H6L7 2.5H14.5V11.5H0.5Z" fill="#dcb67a" stroke="#b8860b" stroke-width="1"/><path d="M0.5 3.5H14.5" stroke="#b8860b" stroke-width="1"/></svg>
<div class="t" style="left:738px;top:513px;font-size:12px;line-height:15px;color:#1e1e1e;transform:scaleX(0.8278);transform-origin:0 0;">iFX</div>
<svg style="position:absolute;left:692px;top:28px;" width="16" height="16" viewBox="0 0 16 16"><rect x="6.5" y="0.5" width="9" height="11" fill="#f0f0f0" stroke="#1e1e1e"/><path d="M8.5 3.5H14M8.5 5.5H14M8.5 7.5H14" stroke="#1e1e1e"/><path d="M0 9.8L1.6 8.8L4.6 11.3L8.6 7.6L9.6 8.2V14.6L8.6 15.2L4.6 11.9L1.6 14.4L0 13.4Z" fill="#8a5bc8"/><path d="M1.8 10.6L3.6 11.6L1.8 12.6Z M8 9.8V13.4L5.8 11.6Z" fill="#ccd5ee"/></svg>
<div style="position:absolute;left:714px;top:26px;width:1px;height:20px;background:#9aa5c8;"></div>
<svg style="position:absolute;left:723px;top:28px;" width="15" height="16" viewBox="0 0 15 16"><path d="M0 0H5L2.5 3Z" fill="#1f6fd0"/><path d="M2.5 2V5" stroke="#1f6fd0"/><circle cx="8.5" cy="9.5" r="5.5" fill="#dfe3ee" stroke="#1e1e1e" stroke-width="1.1"/><path d="M8.5 6.5V9.8H11" stroke="#1e1e1e" fill="none"/></svg>
<svg style="position:absolute;left:745px;top:35px;" width="6" height="4" viewBox="0 0 6 4"><path d="M0 0H6L3.0 3.0Z" fill="#1e1e1e"/></svg>
<svg style="position:absolute;left:758px;top:31px;" width="14" height="10" viewBox="0 0 14 10"><path d="M1 3H13M1 3L4 0.5M13 7H1M13 7L10 9.5" stroke="#1e1e1e" stroke-width="1.1" fill="none"/></svg>
<svg style="position:absolute;left:780px;top:28px;" width="16" height="16" viewBox="0 0 16 16"><rect x="3.5" y="0.5" width="11.5" height="11.5" fill="#dfe3ee" stroke="#5a5a5a"/><rect x="0.5" y="3.5" width="11.5" height="11.5" fill="#c3c9da" stroke="#1e1e1e"/><path d="M3 9.3H9.5" stroke="#1e1e1e" stroke-width="1.1"/></svg>
<div style="position:absolute;left:798px;top:24px;width:22px;height:24px;background:#fdebc8;box-sizing:border-box;border:1.5px solid #9b7532"></div>
<svg style="position:absolute;left:802px;top:28px;" width="15" height="16" viewBox="0 0 15 16"><rect x="4.5" y="0.5" width="10" height="10" fill="#fdebc8" stroke="#424242"/><rect x="4.5" y="4.5" width="6" height="6" fill="#d9cfb8"/><rect x="0.5" y="4.5" width="10" height="10" fill="none" stroke="#424242"/></svg>
<div style="position:absolute;left:823px;top:27px;width:1px;height:18px;background:#9aa5c8;"></div>
<div style="position:absolute;left:829px;top:25px;width:22px;height:22px;background:#fdebc8;box-sizing:border-box;border:1.5px solid #9b7532"></div>
<svg style="position:absolute;left:833px;top:28px;" width="15" height="16" viewBox="0 0 15 16"><circle cx="1.9" cy="2.6" r="1.5" fill="none" stroke="#1e1e1e"/><rect x="4.9" y="5.6" width="3.4" height="3.4" fill="none" stroke="#1e1e1e"/><rect x="9.3" y="10.4" width="4.5" height="4.4" fill="none" stroke="#1e1e1e"/><path d="M1.9 4.1V7.3H4.9M6.6 9V12.6H9.3" fill="none" stroke="#1e1e1e"/></svg>
<svg style="position:absolute;left:855px;top:35px;" width="5" height="3" viewBox="0 0 5 3"><path d="M0 0H5L2.5 2.5Z" fill="#1e1e1e"/></svg>
<div style="position:absolute;left:866px;top:27px;width:1px;height:18px;background:#9aa5c8;"></div>
<svg style="position:absolute;left:874px;top:29px;" width="15" height="15" viewBox="0 0 15 15"><path d="M1.5 13.5L8 7" stroke="#1e1e1e" stroke-width="2.2"/><path d="M7 8C5.5 5 7.5 1 11.5 1.5L9.5 4L11 5.5L13.5 3.5C14 7 10.5 9.5 7 8Z" fill="#1e1e1e"/></svg>
<svg style="position:absolute;left:896px;top:30px;" width="17" height="10" viewBox="0 0 17 10"><path d="M0 8.5H12M2.5 8.5V5.5H11.5V8.5" fill="none" stroke="#1e1e1e" stroke-width="1.1"/><path d="M13 1L14 0M14 4.5H16M13.5 2.5L15.5 1" stroke="#d08a00"/></svg>
</body></html>
